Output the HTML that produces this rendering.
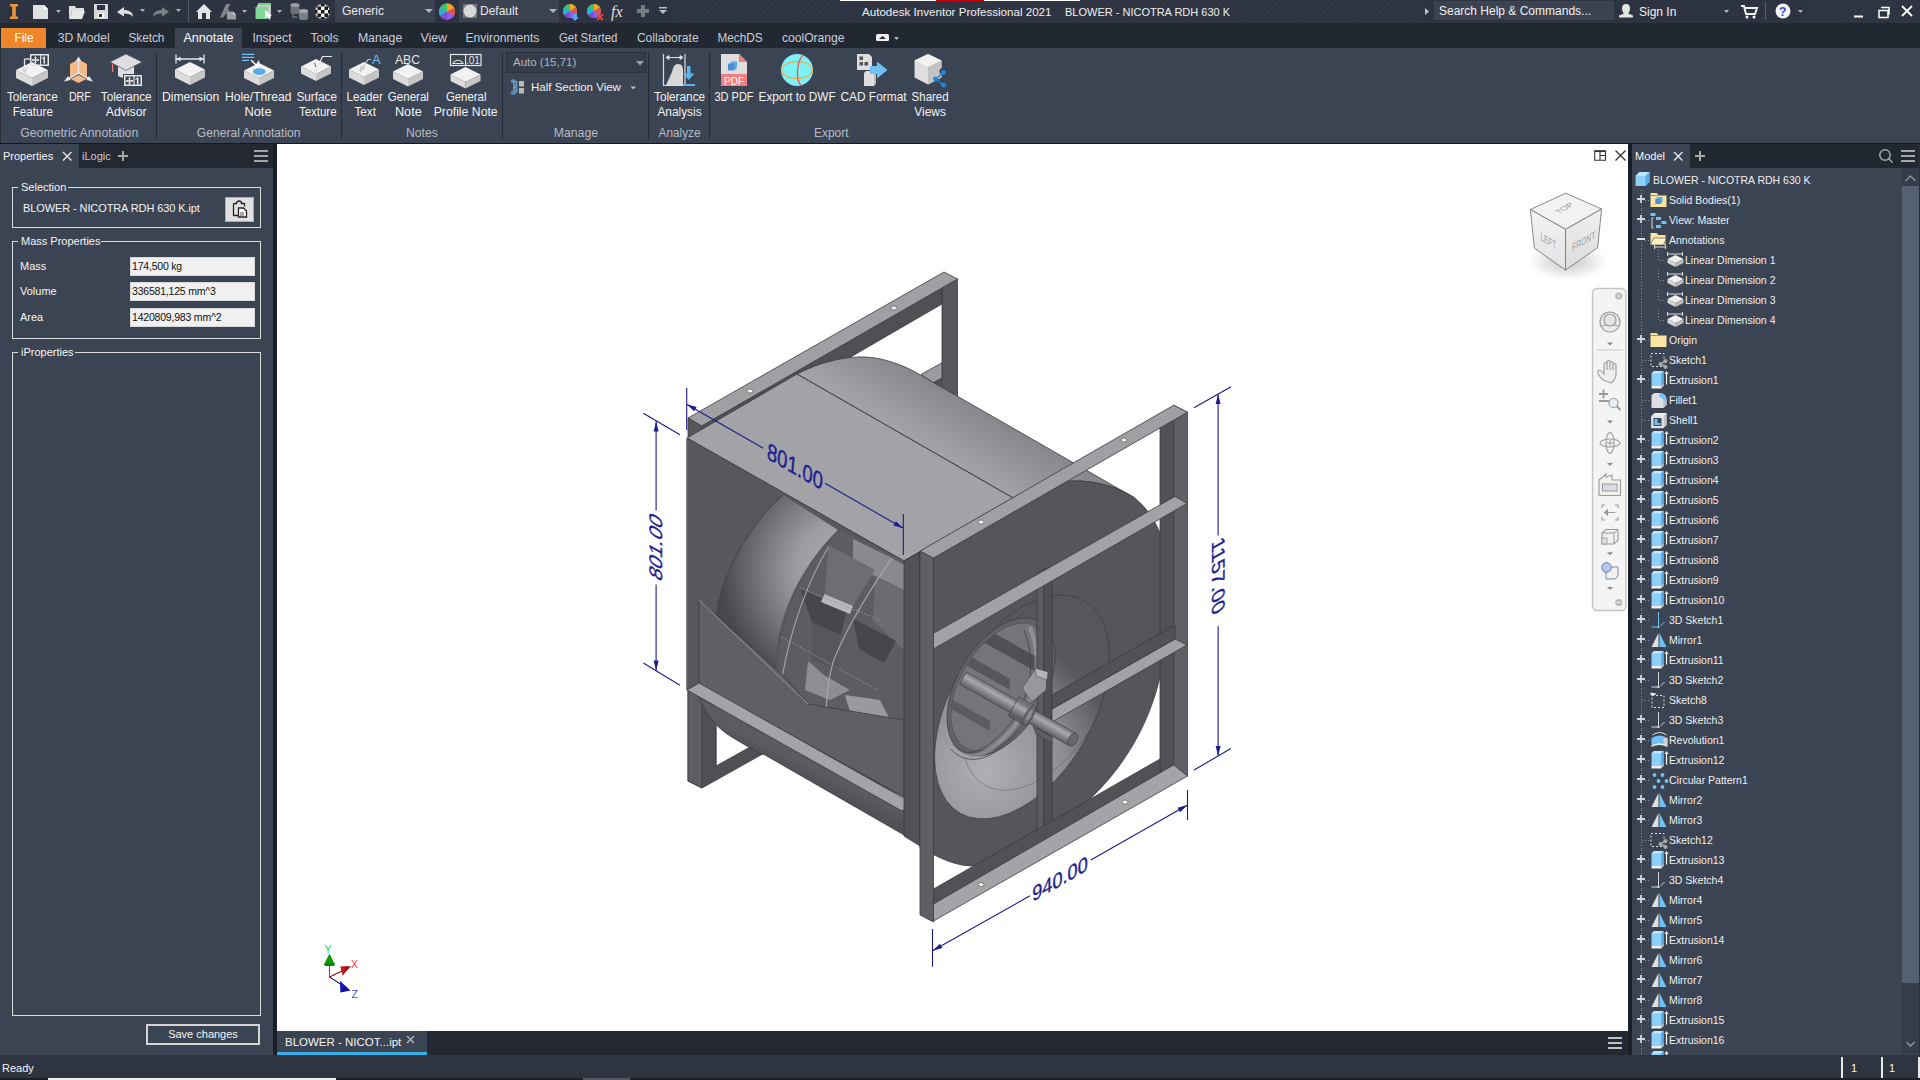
<!DOCTYPE html>
<html><head><meta charset="utf-8">
<style>
*{margin:0;padding:0;box-sizing:border-box}
html,body{width:1920px;height:1080px;overflow:hidden;background:#1b1f26;font-family:"Liberation Sans",sans-serif;color:#f0f0f0}
.a{position:absolute}
.t{position:absolute;white-space:nowrap;font-size:12px;line-height:14px}
svg{position:absolute;overflow:visible}
#title{left:0;top:0;width:1920px;height:23px;background:#2d3340}
.hatch{background:repeating-linear-gradient(135deg,#2d3340 0px,#2d3340 3px,#363c49 3.6px,#2d3340 4.4px)}
#tabs{left:0;top:23px;width:1920px;height:25px;background:#222832}
#ribbon{left:0;top:48px;width:1920px;height:95px;background:#3b4453}
#lp{left:0;top:144px;width:273px;height:911px;background:#3b4453}
#vp{left:277px;top:144px;width:1351px;height:887px;background:#fff;overflow:hidden}
#doctabs{left:277px;top:1031px;width:1351px;height:24px;background:#232832}
#rp{left:1632px;top:144px;width:288px;height:911px;background:#3b4453}
#status{left:0;top:1055px;width:1920px;height:23px;background:#2e3440}
#bottom{left:0;top:1078px;width:1920px;height:2px;background:#1d2026}
.tab{color:#c9ced6}
.rl{color:#f2f2f2;text-align:center;line-height:15px}
.pl{color:#b7bcc5}
.sep{position:absolute;top:52px;width:1px;height:87px;background:#252a33}
.tr{position:absolute;left:0;height:20px;font-size:10.5px;line-height:20px;color:#f0f0f0;white-space:nowrap}
</style></head><body>
<!-- TITLE BAR -->
<div id="title" class="a"></div>
<div class="a hatch" style="left:671px;top:0;width:750px;height:23px"></div>
<div class="a hatch" style="left:1806px;top:0;width:114px;height:23px"></div>
<div class="a hatch" style="left:0;top:0;width:6px;height:23px"></div>
<div class="a" style="left:840px;top:0;width:96px;height:1px;background:#fff"></div>
<div class="a" style="left:936px;top:0;width:48px;height:1px;background:#c00"></div>
<div class="a" style="left:984px;top:0;width:96px;height:1px;background:#fff"></div>
<svg style="left:0;top:0" width="680" height="23">
 <!-- Inventor I -->
 <path d="M10 4h8v2.5h-2.2v10h2.2v2.5h-8v-2.5h2.2v-10h-2.2z" fill="#e8963a"/>
 <!-- new -->
 <path d="M33 5h11l4 4v10h-15z" fill="#e0e0e0"/><path d="M44 5v4h4" fill="#fff"/>
 <path d="M56 10h5l-2.5 3z" fill="#aeb4c0"/>
 <!-- open -->
 <path d="M69 6h6l1 2h8v3h-12l-3 8z" fill="#e0e0e0"/><path d="M72 11h13l-3 8h-13z" fill="#e8e8e8"/>
 <!-- save -->
 <path d="M94 4h14v15h-14z" fill="#d8d8d8"/><rect x="97" y="5" width="8" height="5" fill="#2d3340"/><rect x="98" y="13" width="6" height="5" fill="#fff"/><rect x="99" y="14" width="3" height="3" fill="#2d3340"/>
 <!-- undo -->
 <path d="M117 12l7-5v3c5 0 9 2 9 7c-2-3-5-3.5-9-3.5v3z" fill="#e0e0e0"/>
 <path d="M140 9h5l-2.5 3z" fill="#aeb4c0"/>
 <!-- redo -->
 <path d="M169 12l-7-5v3c-5 0-9 2-9 7c2-3 5-3.5 9-3.5v3z" fill="#7c8088"/>
 <path d="M176 9h5l-2.5 3z" fill="#aeb4c0"/>
 <rect x="188" y="0" width="1" height="22" fill="#545a64"/>
 <!-- home -->
 <path d="M196 12l8-8 8 8h-2v7h-12v-7z" fill="#e4e4e4"/><rect x="202" y="13" width="4" height="6" fill="#2d3340"/>
 <path d="M220 17.5L226 4H230.5L227.5 9.5H230L223 17.5z" fill="#82858c"/><path d="M227 11.5h6l3 3v5h-9z" fill="#9a9ca2"/><path d="M233 11.5v3h3" fill="#c8c8c8"/>
 <path d="M242 10h5l-2.5 3z" fill="#aeb4c0"/>
 <!-- green -->
 <rect x="258" y="3" width="13" height="2" fill="#6fd68a"/><rect x="257" y="5" width="14" height="13" fill="#c8c8c8"/><rect x="255.5" y="7" width="12" height="12" fill="#7fd89a"/>
 <path d="M265 10l7 6h-3l1.5 3.5h-1.5l-1.5-3-2 2z" fill="#fff"/>
 <path d="M277 10h5l-2.5 3z" fill="#aeb4c0"/>
 <!-- cylinders -->
 <rect x="290.5" y="5" width="9" height="7" fill="#6e7178"/><ellipse cx="295" cy="12" rx="4.5" ry="2" fill="#6e7178"/><ellipse cx="295" cy="5" rx="4.5" ry="2" fill="#9a9da4"/>
 <rect x="299" y="11" width="9" height="7" fill="#7a7d84"/><ellipse cx="303.5" cy="18" rx="4.5" ry="2" fill="#7a7d84"/><ellipse cx="303.5" cy="11" rx="4.5" ry="2" fill="#a4a7ae"/><path d="M293 14v3h4" fill="none" stroke="#8a8d94" stroke-width="1"/>
 <!-- checker ball -->
 <clipPath id="cBall"><circle cx="322.5" cy="11.5" r="8"/></clipPath><circle cx="322.5" cy="11.5" r="8" fill="#f4f4f4"/><g clip-path="url(#cBall)" fill="#1a1a1a"><rect x="314" y="3" width="3.5" height="3.5"/><rect x="321" y="3" width="3.5" height="3.5"/><rect x="328" y="3" width="3.5" height="3.5"/><rect x="317.5" y="6.5" width="3.5" height="3.5"/><rect x="324.5" y="6.5" width="3.5" height="3.5"/><rect x="314" y="10" width="3.5" height="3.5"/><rect x="321" y="10" width="3.5" height="3.5"/><rect x="328" y="10" width="3.5" height="3.5"/><rect x="317.5" y="13.5" width="3.5" height="3.5"/><rect x="324.5" y="13.5" width="3.5" height="3.5"/><rect x="314" y="17" width="3.5" height="3.5"/><rect x="321" y="17" width="3.5" height="3.5"/><rect x="328" y="17" width="3.5" height="3.5"/></g><circle cx="322.5" cy="11.5" r="7.6" fill="none" stroke="#222" stroke-width="0.9"/>
 <!-- generic box -->
 <rect x="335" y="0" width="100" height="22" fill="#3b4250"/>
 <path d="M425 9h8l-4 4z" fill="#aeb4c0"/>
 <circle cx="447" cy="11.5" r="8" fill="#e94"/>
 <path d="M447 11.5L447 3.5A8 8 0 0 1 454 8z" fill="#f5a623"/><path d="M447 11.5L454 8A8 8 0 0 1 454 15.5z" fill="#e84f4f"/><path d="M447 11.5L454 15.5A8 8 0 0 1 447 19.5z" fill="#8b5cf6"/><path d="M447 11.5L447 19.5A8 8 0 0 1 440 15.5z" fill="#7c4ddb"/><path d="M447 11.5L440 15.5A8 8 0 0 1 440 8z" fill="#1fb5d6"/><path d="M447 11.5L440 8A8 8 0 0 1 447 3.5z" fill="#3cc46a"/>
 <rect x="459" y="0" width="100" height="22" fill="#3b4250"/>
 <rect x="463" y="4" width="14" height="14" fill="#777"/><circle cx="470" cy="11" r="6.5" fill="#d8d8d8"/>
 <path d="M549 9h8l-4 4z" fill="#aeb4c0"/>
 <g transform="translate(570,11)"><circle r="7" fill="#3cc46a"/><path d="M0 0L0 -7A7 7 0 0 1 6 -3.5z" fill="#f5a623"/><path d="M0 0L6 -3.5A7 7 0 0 1 6 3.5z" fill="#e84f4f"/><path d="M0 0L6 3.5A7 7 0 0 1 0 7z" fill="#8b5cf6"/><path d="M0 0L0 7A7 7 0 0 1 -6 3.5z" fill="#7c4ddb"/><path d="M0 0L-6 3.5A7 7 0 0 1 -6 -3.5z" fill="#1fb5d6"/></g>
 <path d="M573 14h4v3h2l-4 4-4-4h2z" fill="#4aa8f0"/>
 <g transform="translate(594,11)"><circle r="7" fill="#3cc46a"/><path d="M0 0L0 -7A7 7 0 0 1 6 -3.5z" fill="#f5a623"/><path d="M0 0L6 -3.5A7 7 0 0 1 6 3.5z" fill="#e84f4f"/><path d="M0 0L6 3.5A7 7 0 0 1 0 7z" fill="#8b5cf6"/><path d="M0 0L0 7A7 7 0 0 1 -6 3.5z" fill="#7c4ddb"/><path d="M0 0L-6 3.5A7 7 0 0 1 -6 -3.5z" fill="#1fb5d6"/></g>
 <path d="M597 14l6 6M603 14l-6 6" stroke="#ee4444" stroke-width="1.8"/>
 <text x="611" y="17" font-family="Liberation Serif" font-style="italic" font-size="16" fill="#e0e0e0">fx</text>
 <path d="M641 5h4v4h4v4h-4v4h-4v-4h-4v-4h4z" fill="#787b82"/>
 <rect x="659" y="7" width="8" height="1.5" fill="#b8c0cc"/><path d="M659 10h8l-4 4z" fill="#b8c0cc"/>
</svg>
<div class="t" style="left:342px;top:4px;font-size:12px;color:#e8e8e8">Generic</div>
<div class="t" style="left:480px;top:4px;font-size:12px;color:#e8e8e8">Default</div>
<div class="t" style="left:862px;top:5px;font-size:11.6px;color:#f0f0f0">Autodesk Inventor Professional 2021</div>
<div class="t" style="left:1065px;top:5px;font-size:11px;color:#f0f0f0">BLOWER - NICOTRA RDH 630 K</div>
<svg style="left:1400px;top:0" width="520" height="23">
 <path d="M25 8l4 3.5-4 3.5z" fill="#c0c4cc"/>
 <rect x="34" y="1" width="180" height="19" fill="#3b4250"/>
 <path d="M226 4c3 0 4 2 4 4.5s-1 4-2 5l5 2v2h-14v-2l5-2c-1-1-2-2.5-2-5s1-4.5 4-4.5z" fill="#e4e4e4"/>
 <path d="M324 10h5l-2.5 3z" fill="#aeb4c0"/>
 <path d="M341 6h3l2 8h9l2-6h-12" fill="none" stroke="#f0f0f0" stroke-width="2"/><circle cx="347" cy="17" r="1.5" fill="#fff"/><circle cx="354" cy="17" r="1.5" fill="#fff"/>
 <rect x="365" y="2" width="1" height="18" fill="#5a606a"/>
 <circle cx="383" cy="11" r="7.5" fill="#f4f4f4"/><text x="379" y="15.5" font-size="12" font-weight="bold" fill="#1e50c8">?</text>
 <path d="M398 10h5l-2.5 3z" fill="#aeb4c0"/>
 <rect x="454" y="15.5" width="9" height="2" fill="#fff"/>
 <path d="M479 10.5h9v7h-9z M481 7.5h8v7" fill="none" stroke="#fff" stroke-width="1.5"/>
 <path d="M502 6l10 10M512 6l-10 10" stroke="#fff" stroke-width="1.8"/>
</svg>
<div class="t" style="left:1439px;top:4px;font-size:12px;color:#f0f0f0">Search Help &amp; Commands...</div>
<div class="t" style="left:1639px;top:5px;font-size:12px;color:#f0f0f0">Sign In</div>

<!-- TABS -->
<div id="tabs" class="a"></div>
<div class="a" style="left:1px;top:28px;width:45px;height:20px;background:#f0862a"></div>
<div class="a" style="left:175px;top:28px;width:67px;height:20px;background:#3b4453"></div>
<svg style="left:0;top:0" width="960" height="48">
<text x="14.4" y="42" font-family="Liberation Sans" font-size="12" fill="#fff" textLength="19.2" lengthAdjust="spacingAndGlyphs">File</text>
<text x="57.699999999999996" y="42" font-family="Liberation Sans" font-size="12" fill="#c9ced6" textLength="51.9" lengthAdjust="spacingAndGlyphs">3D Model</text>
<text x="128.4" y="42" font-family="Liberation Sans" font-size="12" fill="#c9ced6" textLength="36.0" lengthAdjust="spacingAndGlyphs">Sketch</text>
<text x="183.4" y="42" font-family="Liberation Sans" font-size="12" fill="#fff" textLength="50.2" lengthAdjust="spacingAndGlyphs">Annotate</text>
<text x="252.4" y="42" font-family="Liberation Sans" font-size="12" fill="#c9ced6" textLength="39.2" lengthAdjust="spacingAndGlyphs">Inspect</text>
<text x="310.4" y="42" font-family="Liberation Sans" font-size="12" fill="#c9ced6" textLength="28.2" lengthAdjust="spacingAndGlyphs">Tools</text>
<text x="357.9" y="42" font-family="Liberation Sans" font-size="12" fill="#c9ced6" textLength="44.4" lengthAdjust="spacingAndGlyphs">Manage</text>
<text x="420.4" y="42" font-family="Liberation Sans" font-size="12" fill="#c9ced6" textLength="26.7" lengthAdjust="spacingAndGlyphs">View</text>
<text x="465.4" y="42" font-family="Liberation Sans" font-size="12" fill="#c9ced6" textLength="74.0" lengthAdjust="spacingAndGlyphs">Environments</text>
<text x="558.9" y="42" font-family="Liberation Sans" font-size="12" fill="#c9ced6" textLength="58.5" lengthAdjust="spacingAndGlyphs">Get Started</text>
<text x="636.9" y="42" font-family="Liberation Sans" font-size="12" fill="#c9ced6" textLength="61.7" lengthAdjust="spacingAndGlyphs">Collaborate</text>
<text x="717.4" y="42" font-family="Liberation Sans" font-size="12" fill="#c9ced6" textLength="45.2" lengthAdjust="spacingAndGlyphs">MechDS</text>
<text x="781.9" y="42" font-family="Liberation Sans" font-size="12" fill="#c9ced6" textLength="62.7" lengthAdjust="spacingAndGlyphs">coolOrange</text>
</svg>
<svg style="left:870px;top:23px" width="40" height="25"><rect x="6" y="11" width="13" height="7" rx="1.5" fill="#f0f0f0"/><path d="M9 16l3.5-3 3.5 3z" fill="#222832"/><path d="M24 14h5l-2.5 3z" fill="#aeb4c0"/></svg>

<!-- RIBBON -->
<div id="ribbon" class="a"></div>
<div class="a" style="left:0;top:48px;width:1px;height:95px;background:#2a303a"></div>
<div class="a" style="left:0;top:143px;width:1920px;height:1px;background:#161a20"></div>
<div class="sep" style="left:156px"></div>
<div class="sep" style="left:341px"></div>
<div class="sep" style="left:502px"></div>
<div class="sep" style="left:648px"></div>
<div class="sep" style="left:709px"></div>
<svg style="left:0;top:0" width="960" height="143">
<path d="M32 62L48 70.0L32 78.0L16 70.0z" fill="#f2f2f2"/><path d="M16 70.0L32 78.0L32 86.0L16 78.0z" fill="#dcdcdc"/><path d="M32 78.0L48 70.0L48 78.0L32 86.0z" fill="#c6c6c6"/>
<path d="M24.5 59V71" stroke="#e6e6e6" stroke-width="1.3" fill="none"/><path d="M24.5 59H30" stroke="#e6e6e6" stroke-width="1.3"/><path d="M21.5 67l3 5 3-5" fill="none" stroke="#c8c8c8" stroke-width="1.2"/>
<rect x="30.75" y="54.75" width="17.5" height="10.5" fill="none" stroke="#e6e6e6" stroke-width="1.5"/><rect x="39.95" y="54" width="1.2" height="12" fill="#e6e6e6"/><path d="M35.5 56.5v7M32 60h7" stroke="#e6e6e6" stroke-width="1.3"/><path d="M35.5 56.5l-1.5 1.5h3zM35.5 63.5l-1.5 -1.5h3zM32 60l1.5 -1.5v3zM39 60l-1.5 -1.5v3z" fill="#e6e6e6"/><rect x="43.45" y="56.5" width="1.6" height="7" fill="#e6e6e6"/><path d="M43.45 56.5l-1.5 1.5v1l1.5-0.5z" fill="#e6e6e6"/>
<path d="M70 64l8.5-4.5v13l-8.5 4.5z" fill="#f5b987"/><path d="M87 64l-8.5-4.5v13l8.5 4.5z" fill="#f5b987"/><path d="M78.5 75l8 4-8 4-8-4z" fill="#f5b987"/>
<path d="M78.5 73V59M78.5 73L67 79.5M78.5 73L90 79.5" stroke="#e8e8e8" stroke-width="1.5"/>
<path d="M78.5 56.5l-3 5h6z M64 81.5l6.5-1.5-2.5-4z M93 81.5l-6.5-1.5 2.5-4z" fill="#e8e8e8"/>
<path d="M118 66.5h16v10.5l-6 0-4 1.5-6-2.5z" fill="#dedede"/>
<path d="M126 54L142 62L126 70.5L110 62z" fill="#dedede" stroke="#3b4453" stroke-width="0.6"/>
<rect x="112" y="64" width="1.3" height="8" fill="#f07070"/>
<rect x="123" y="74" width="20" height="13" fill="#3b4453"/>
<rect x="124.75" y="75.75" width="16.5" height="9.5" fill="none" stroke="#e6e6e6" stroke-width="1.5"/><rect x="133.4" y="75" width="1.2" height="11" fill="#e6e6e6"/><path d="M129.5 77.5v7M126 81h7" stroke="#e6e6e6" stroke-width="1.3"/><path d="M129.5 77.5l-1.5 1.5h3zM129.5 84.5l-1.5 -1.5h3zM126 81l1.5 -1.5v3zM133 81l-1.5 -1.5v3z" fill="#e6e6e6"/><rect x="136.9" y="77.5" width="1.6" height="7" fill="#e6e6e6"/><path d="M136.9 77.5l-1.5 1.5v1l1.5-0.5z" fill="#e6e6e6"/>
<path d="M190 62L205 69.5L190 77.0L175 69.5z" fill="#f2f2f2"/><path d="M175 69.5L190 77.0L190 85.0L175 77.5z" fill="#dcdcdc"/><path d="M190 77.0L205 69.5L205 77.5L190 85.0z" fill="#c6c6c6"/>
<path d="M176 54.5v9M204 54.5v9M176 59h28" stroke="#e6e6e6" stroke-width="1.3"/><path d="M176.5 59l4-2.5v5zM203.5 59l-4-2.5v5z" fill="#e6e6e6"/>
<path d="M259 63L274 70.5L259 78.0L244 70.5z" fill="#f2f2f2"/><path d="M244 70.5L259 78.0L259 85.5L244 78.0z" fill="#dcdcdc"/><path d="M259 78.0L274 70.5L274 78.0L259 85.5z" fill="#c6c6c6"/>
<ellipse cx="259.3" cy="71.6" rx="6.4" ry="3.3" fill="#5aaae6"/>
<path d="M242 54.4h12.3M242 57.3h12.3M242 60.3h7" stroke="#6ec0f5" stroke-width="1.2"/>
<path d="M251 60l6 6" stroke="#fff" stroke-width="1.5"/><path d="M254 67l6-1-1-6z" fill="#fff"/>
<path d="M316 59L331 66.5L316 74.0L301 66.5z" fill="#f2f2f2"/><path d="M301 66.5L316 74.0L316 81.0L301 73.5z" fill="#dcdcdc"/><path d="M316 74.0L331 66.5L331 73.5L316 81.0z" fill="#c6c6c6"/>
<path d="M313 63l3 7.5l6.5-14h9.5" fill="none" stroke="#e8e8e8" stroke-width="1.2"/><path d="M314.5 63l1.5 4" stroke="#3b4453" stroke-width="0.8"/>
<path d="M364 62L379 69.5L364 77.0L349 69.5z" fill="#f2f2f2"/><path d="M349 69.5L364 77.0L364 85.0L349 77.5z" fill="#dcdcdc"/><path d="M364 77.0L379 69.5L379 77.5L364 85.0z" fill="#c6c6c6"/>
<text x="372" y="64" font-size="13" fill="#6ec0f5" font-family="Liberation Sans">A</text>
<path d="M371 59.5h-3l-8 12" stroke="#c8c8c8" stroke-width="1.2" fill="none"/><path d="M360 72l1-6 4 2z" fill="#d0d0d0" stroke="#c8c8c8" stroke-width="0.8"/>
<path d="M408 64L423 71.5L408 79.0L393 71.5z" fill="#f2f2f2"/><path d="M393 71.5L408 79.0L408 86.5L393 79.0z" fill="#dcdcdc"/><path d="M408 79.0L423 71.5L423 79.0L408 86.5z" fill="#c6c6c6"/>
<text x="395" y="64" font-size="12.5" fill="#e6e6e6" font-family="Liberation Sans" textLength="25" lengthAdjust="spacingAndGlyphs">ABC</text>
<path d="M465.5 67L480.5 74.5L465.5 82.0L450.5 74.5z" fill="#f2f2f2"/><path d="M450.5 74.5L465.5 82.0L465.5 88.5L450.5 81.0z" fill="#dcdcdc"/><path d="M465.5 82.0L480.5 74.5L480.5 81.0L465.5 88.5z" fill="#c6c6c6"/>
<rect x="450.5" y="54.5" width="30.5" height="11" fill="none" stroke="#e6e6e6" stroke-width="1.2"/><rect x="465" y="54.5" width="1.1" height="11" fill="#e6e6e6"/><path d="M453 63.5a5.5 5.5 0 0 1 10 0z" fill="none" stroke="#e6e6e6" stroke-width="1.1"/>
<text x="466" y="64" font-size="10" fill="#e6e6e6" font-family="Liberation Sans">.01</text>
<path d="M512 80h3M512 80v3M512 91v3h3M515 80v14" stroke="#5ab4f0" stroke-width="1.2" fill="none"/><rect x="513.5" y="81.5" width="3.5" height="4.5" fill="#6a7a8c" stroke="#5ab4f0" stroke-width="0.8"/><rect x="513.5" y="87.5" width="3.5" height="4.5" fill="#6a7a8c" stroke="#5ab4f0" stroke-width="0.8"/><rect x="519" y="81" width="5" height="5.5" fill="#b8b8b8"/><rect x="519" y="88" width="5" height="5.5" fill="#b8b8b8"/>
<path d="M636 61h8l-4 4.5z" fill="#9aa0aa"/><path d="M630.5 86.5h5.5l-2.75 3z" fill="#b8bec8"/>
<path d="M663.5 54v31.5h21M685 54v32" stroke="#dcdcdc" stroke-width="1.2" fill="none"/><path d="M666 57.5h17M666 57.5l3-2v4zM683 57.5l-3-2v4z" stroke="#dcdcdc" stroke-width="1" fill="#dcdcdc"/>
<path d="M666 85l6-13c1-4 2-8 6-8s5 3 5 6v15z" fill="#d8d8d8"/>
<path d="M687 66h3.5v7.5h4l-5.75 6.5-5.75-6.5h4z" fill="#5ab4f0"/><rect x="683" y="84" width="12" height="2" fill="#5ab4f0"/>
<path d="M721 54h18l8 8v24h-26z" fill="#dedede"/><path d="M739 54l8 8h-8z" fill="#f08080"/><rect x="721" y="74" width="26" height="12" fill="#f08080"/>
<text x="724" y="84.5" font-size="10" fill="#fff" font-family="Liberation Sans">PDF</text>
<path d="M728 64l4-2.5h5v6.5l-3 2.5h-6z" fill="#5aa8e8"/><path d="M728 64h6v6h-6z" fill="#4a90d0"/>
<circle cx="797" cy="70" r="16" fill="#7ef0f8"/>
<ellipse cx="797" cy="70" rx="15.5" ry="8.5" fill="none" stroke="#f0b040" stroke-width="1.3"/><path d="M804 54.5c-7 5-9 24-3 31" fill="none" stroke="#e85a5a" stroke-width="1.3"/>
<path d="M857 54h12l3 3v13h-15z" fill="#dedede"/><rect x="859.5" y="56.5" width="3.5" height="3.5" fill="#555"/><rect x="859.5" y="62" width="3.5" height="3.5" fill="#555"/><rect x="864.5" y="62" width="3.5" height="3.5" fill="#555"/>
<path d="M864 73l2-2h10v12l-2 3h-10z" fill="#dedede"/><path d="M874 74l2-3v12l-2 3z" fill="#bdbdbd"/>
<path d="M870 66h7v-4.5l10.5 8.5-10.5 8.5v-4.5h-7z" fill="#6ec0f5"/>
<path d="M928 54l13.5 6.5v17l-13.5 7-13.5-7v-17z" fill="#dedede"/><path d="M914.5 60.5l13.5 6.5 13.5-6.5-13.5-6.5z" fill="#f2f2f2"/><path d="M928 67l13.5-6.5v17l-13.5 7z" fill="#c2c2c2"/>
<circle cx="943" cy="71.5" r="3.5" fill="#3b4453"/><path d="M936 79l7-6M936 79l7 6" stroke="#1e88e5" stroke-width="1.6"/><circle cx="935.5" cy="79" r="2.4" fill="#1e88e5"/><circle cx="943.5" cy="72.5" r="2.4" fill="#1e88e5"/><circle cx="943.5" cy="85" r="2.4" fill="#1e88e5"/>
</svg>
<svg style="left:0;top:0" width="960" height="143">
<text x="6.9" y="101" font-family="Liberation Sans" font-size="12" fill="#f2f2f2" textLength="50.8" lengthAdjust="spacingAndGlyphs">Tolerance</text>
<text x="12.700000000000001" y="116" font-family="Liberation Sans" font-size="12" fill="#f2f2f2" textLength="40.2" lengthAdjust="spacingAndGlyphs">Feature</text>
<text x="68.9" y="101" font-family="Liberation Sans" font-size="12" fill="#f2f2f2" textLength="22.0" lengthAdjust="spacingAndGlyphs">DRF</text>
<text x="100.80000000000001" y="101" font-family="Liberation Sans" font-size="12" fill="#f2f2f2" textLength="50.8" lengthAdjust="spacingAndGlyphs">Tolerance</text>
<text x="105.7" y="116" font-family="Liberation Sans" font-size="12" fill="#f2f2f2" textLength="41.0" lengthAdjust="spacingAndGlyphs">Advisor</text>
<text x="161.9" y="101" font-family="Liberation Sans" font-size="12" fill="#f2f2f2" textLength="57.5" lengthAdjust="spacingAndGlyphs">Dimension</text>
<text x="224.9" y="101" font-family="Liberation Sans" font-size="12" fill="#f2f2f2" textLength="66.7" lengthAdjust="spacingAndGlyphs">Hole/Thread</text>
<text x="244.4" y="116" font-family="Liberation Sans" font-size="12" fill="#f2f2f2" textLength="27.2" lengthAdjust="spacingAndGlyphs">Note</text>
<text x="296.4" y="101" font-family="Liberation Sans" font-size="12" fill="#f2f2f2" textLength="40.7" lengthAdjust="spacingAndGlyphs">Surface</text>
<text x="298.9" y="116" font-family="Liberation Sans" font-size="12" fill="#f2f2f2" textLength="37.7" lengthAdjust="spacingAndGlyphs">Texture</text>
<text x="346.59999999999997" y="101" font-family="Liberation Sans" font-size="12" fill="#f2f2f2" textLength="36.3" lengthAdjust="spacingAndGlyphs">Leader</text>
<text x="354.4" y="116" font-family="Liberation Sans" font-size="12" fill="#f2f2f2" textLength="21.5" lengthAdjust="spacingAndGlyphs">Text</text>
<text x="387.79999999999995" y="101" font-family="Liberation Sans" font-size="12" fill="#f2f2f2" textLength="41.1" lengthAdjust="spacingAndGlyphs">General</text>
<text x="394.9" y="116" font-family="Liberation Sans" font-size="12" fill="#f2f2f2" textLength="26.9" lengthAdjust="spacingAndGlyphs">Note</text>
<text x="445.9" y="101" font-family="Liberation Sans" font-size="12" fill="#f2f2f2" textLength="40.6" lengthAdjust="spacingAndGlyphs">General</text>
<text x="433.7" y="116" font-family="Liberation Sans" font-size="12" fill="#f2f2f2" textLength="64.0" lengthAdjust="spacingAndGlyphs">Profile Note</text>
<text x="654.0" y="101" font-family="Liberation Sans" font-size="12" fill="#f2f2f2" textLength="51.1" lengthAdjust="spacingAndGlyphs">Tolerance</text>
<text x="657.4" y="116" font-family="Liberation Sans" font-size="12" fill="#f2f2f2" textLength="44.2" lengthAdjust="spacingAndGlyphs">Analysis</text>
<text x="714.4" y="101" font-family="Liberation Sans" font-size="12" fill="#f2f2f2" textLength="39.2" lengthAdjust="spacingAndGlyphs">3D PDF</text>
<text x="758.6" y="101" font-family="Liberation Sans" font-size="12" fill="#f2f2f2" textLength="77.0" lengthAdjust="spacingAndGlyphs">Export to DWF</text>
<text x="840.4" y="101" font-family="Liberation Sans" font-size="12" fill="#f2f2f2" textLength="66.2" lengthAdjust="spacingAndGlyphs">CAD Format</text>
<text x="911.6" y="101" font-family="Liberation Sans" font-size="12" fill="#f2f2f2" textLength="37.0" lengthAdjust="spacingAndGlyphs">Shared</text>
<text x="914.3" y="116" font-family="Liberation Sans" font-size="12" fill="#f2f2f2" textLength="31.7" lengthAdjust="spacingAndGlyphs">Views</text>
</svg>
<div class="a" style="left:506px;top:52px;width:140px;height:21px;background:#353d4b;border:1px solid #2a313c"></div>
<div class="t" style="left:513px;top:55px;font-size:11.5px;color:#b0b5bd">Auto (15,71)</div>
<svg style="left:630px;top:55px" width="20" height="15"><path d="M6 6h8l-4 4.5z" fill="#9aa0aa"/></svg>
<div class="t" style="left:531px;top:80px;font-size:11.5px;color:#f0f0f0">Half Section View</div>


<svg style="left:0;top:0" width="960" height="143">
<text x="20.2" y="136.5" font-family="Liberation Sans" font-size="12" fill="#b7bcc5" textLength="118.1" lengthAdjust="spacingAndGlyphs">Geometric Annotation</text>
<text x="196.8" y="136.5" font-family="Liberation Sans" font-size="12" fill="#b7bcc5" textLength="103.8" lengthAdjust="spacingAndGlyphs">General Annotation</text>
<text x="406.09999999999997" y="136.5" font-family="Liberation Sans" font-size="12" fill="#b7bcc5" textLength="31.7" lengthAdjust="spacingAndGlyphs">Notes</text>
<text x="553.8" y="136.5" font-family="Liberation Sans" font-size="12" fill="#b7bcc5" textLength="44.2" lengthAdjust="spacingAndGlyphs">Manage</text>
<text x="658.6" y="136.5" font-family="Liberation Sans" font-size="12" fill="#b7bcc5" textLength="41.9" lengthAdjust="spacingAndGlyphs">Analyze</text>
<text x="814.1" y="136.5" font-family="Liberation Sans" font-size="12" fill="#b7bcc5" textLength="34.4" lengthAdjust="spacingAndGlyphs">Export</text>
</svg>
<!-- LEFT PANEL -->
<div class="a" style="left:0;top:144px;width:273px;height:911px;background:#3b4453"></div>
<div class="a" style="left:0;top:144px;width:273px;height:24px;background:#232832"></div>
<div class="a" style="left:0;top:144px;width:79px;height:24px;background:#3b4453"></div>
<div class="t" style="left:3px;top:149px;font-size:11px;color:#f4f4f4">Properties</div>
<div class="t" style="left:82px;top:149px;font-size:11px;color:#c8ccd2">iLogic</div>
<svg style="left:0;top:144px" width="273" height="24"><path d="M63 8l8.5 8.5M71.5 8l-8.5 8.5" stroke="#e8e8e8" stroke-width="1.4"/><path d="M123 7v10M118 12h10" stroke="#a8a8a8" stroke-width="2"/><path d="M254 7h14M254 12h14M254 17h14" stroke="#a5a5a5" stroke-width="2"/></svg>
<div class="a" style="left:12px;top:187px;width:249px;height:41px;border:1px solid #dcdcdc"></div><div class="a" style="left:18px;top:184px;width:50px;height:6px;background:#3b4453"></div><div class="t" style="left:21px;top:180px;font-size:11px;color:#f4f4f4">Selection</div>
<div class="t" style="left:23px;top:201px;font-size:11px;color:#f4f4f4;letter-spacing:-0.1px">BLOWER - NICOTRA RDH 630 K.ipt</div>
<div class="a" style="left:225px;top:197px;width:29px;height:25px;background:#e1e1e1;border:1px solid #adadad"></div>
<svg style="left:225px;top:197px" width="29" height="25"><path d="M8.5 6.5h3a2.5 2.5 0 0 1 5 0h3v3" fill="none" stroke="#222" stroke-width="1.3"/><path d="M8.5 6.5v12h5" fill="none" stroke="#222" stroke-width="1.3"/><path d="M13.5 11h5l3 3v6h-8z" fill="#fff" stroke="#222" stroke-width="1.3"/><path d="M15 16h4M15 18h4" stroke="#222" stroke-width="0.8"/></svg>
<div class="a" style="left:12px;top:241px;width:249px;height:98px;border:1px solid #dcdcdc"></div><div class="a" style="left:18px;top:238px;width:83px;height:6px;background:#3b4453"></div><div class="t" style="left:21px;top:234px;font-size:11px;color:#f4f4f4">Mass Properties</div>
<div class="t" style="left:20px;top:259px;font-size:11px;color:#f4f4f4">Mass</div>
<div class="a" style="left:130px;top:257px;width:125px;height:19px;background:#f0f0f0;border:1px solid #d9d9d9"></div>
<div class="t" style="left:132px;top:259px;font-size:10.5px;color:#111;letter-spacing:-0.2px">174,500 kg</div>
<div class="t" style="left:20px;top:284px;font-size:11px;color:#f4f4f4">Volume</div>
<div class="a" style="left:130px;top:282px;width:125px;height:19px;background:#f0f0f0;border:1px solid #d9d9d9"></div>
<div class="t" style="left:132px;top:284px;font-size:10.5px;color:#111;letter-spacing:-0.2px">336581,125 mm^3</div>
<div class="t" style="left:20px;top:310px;font-size:11px;color:#f4f4f4">Area</div>
<div class="a" style="left:130px;top:308px;width:125px;height:19px;background:#f0f0f0;border:1px solid #d9d9d9"></div>
<div class="t" style="left:132px;top:310px;font-size:10.5px;color:#111;letter-spacing:-0.2px">1420809,983 mm^2</div>
<div class="a" style="left:12px;top:352px;width:249px;height:664px;border:1px solid #dcdcdc"></div><div class="a" style="left:18px;top:349px;width:57px;height:6px;background:#3b4453"></div><div class="t" style="left:21px;top:345px;font-size:11px;color:#f4f4f4">iProperties</div>
<div class="a" style="left:146px;top:1024px;width:114px;height:21px;border:2px solid #d4d4d4;background:#3b4453"></div>
<div class="t" style="left:146px;top:1027px;width:114px;text-align:center;font-size:11px;color:#f4f4f4">Save changes</div>
<div class="a" style="left:273px;top:144px;width:4px;height:911px;background:#1a1e25"></div>
<div class="a" style="left:1628px;top:144px;width:4px;height:911px;background:#1a1e25"></div>
<!-- VIEWPORT -->
<div class="a" style="left:277px;top:144px;width:1351px;height:887px;background:#fff"></div>
<svg style="left:0;top:0" width="1628" height="1031" viewBox="0 0 1628 1031">
<defs>
<linearGradient id="gWrap" gradientUnits="userSpaceOnUse" x1="930" y1="450" x2="960" y2="400"><stop offset="0" stop-color="#a4a4a8"/><stop offset="1" stop-color="#88888d"/></linearGradient>
<linearGradient id="gBot" gradientUnits="userSpaceOnUse" x1="800" y1="760" x2="780" y2="800"><stop offset="0" stop-color="#5a5c61"/><stop offset="1" stop-color="#3c3e42"/></linearGradient>
<radialGradient id="gCone" gradientUnits="userSpaceOnUse" cx="985" cy="760" r="130"><stop offset="0" stop-color="#a2a2a6"/><stop offset="0.55" stop-color="#6e7074"/><stop offset="1" stop-color="#4a4c50"/></radialGradient>
<radialGradient id="gBand" gradientUnits="userSpaceOnUse" cx="845" cy="570" r="125"><stop offset="0" stop-color="#b0b0b4"/><stop offset="0.4" stop-color="#9c9ca0"/><stop offset="0.75" stop-color="#6a6c70"/><stop offset="1" stop-color="#46484c"/></radialGradient>
<linearGradient id="gShaft" gradientUnits="userSpaceOnUse" x1="0" y1="-7" x2="0" y2="7"><stop offset="0" stop-color="#7a7c80"/><stop offset="0.4" stop-color="#a4a4a8"/><stop offset="1" stop-color="#55575b"/></linearGradient>
<clipPath id="cOut"><path d="M687 438L904 561L904 797L687 690z"/></clipPath>
<clipPath id="cInner"><ellipse cx="0" cy="0" rx="1" ry="1"/></clipPath>
</defs>
<path d="M942 287.7L957.5 279L957.5 400L942 400z" fill="#56585d" stroke="#3a3b3f" stroke-width="0.8" stroke-linejoin="round"/>
<path d="M925 380L942 370L942 398L928 398z" fill="#4e5055"/>
<path d="M921 374.4L942 362.8L942 377.8L933.3 382.8z" fill="#9c9ca0" stroke="#3a3b3f" stroke-width="0.8" stroke-linejoin="round"/>
<path d="M701.5 426L942 287.7L942 304L701.5 443.5z" fill="#4e5055" stroke="#3a3b3f" stroke-width="0.8" stroke-linejoin="round"/>
<path d="M688 418L944 272L957.5 279L701.5 426z" fill="#a0a0a4" stroke="#3a3b3f" stroke-width="0.8" stroke-linejoin="round"/>
<path d="M688 418L701.5 426L701.5 433L688 439z" fill="#55575c" stroke="#3a3b3f" stroke-width="0.8" stroke-linejoin="round"/>
<path d="M797 374C820 362 845 356 866 357C885 358 905 366 918.7 374L1134.7 498C1120 488 1100 482 1080 481C1055 480 1030 488 1013 498z" fill="url(#gWrap)" stroke="#3a3b3f" stroke-width="0.8" stroke-linejoin="round"/>
<path d="M688 683L716 698L716 766L768 737L768 751L702 788L688 781z" fill="#4e5055" stroke="#3a3b3f" stroke-width="0.8" stroke-linejoin="round"/>
<path d="M688 683L702 690L702 788L688 781z" fill="#5c5e63" stroke="#3a3b3f" stroke-width="0.8" stroke-linejoin="round"/>
<path d="M716 698V766" stroke="#3a3b3f" stroke-width="0.8"/>
<path d="M699 697C705 712 712 724 730 736C745 745 755 751 765 755L925 847L925 806L902 811z" fill="url(#gBot)" stroke="#3a3b3f" stroke-width="0.8" stroke-linejoin="round"/>
<path d="M687 438L797 374L1013 498L904 561z" fill="#a3a3a7" stroke="#3a3b3f" stroke-width="0.8" stroke-linejoin="round"/>
<path d="M797 374L1012 497" stroke="#505256" stroke-width="0.9"/>
<path d="M687 438L904 561L904 797L687 690z" fill="#56585d" stroke="#3a3b3f" stroke-width="0.8" stroke-linejoin="round"/>
<g clip-path="url(#cOut)">
<path d="M783 495C755 520 728 560 718 606C712 640 716 665 730 690L790 720C775 690 772 660 780 630C790 590 812 555 838 530z" fill="url(#gBand)"/>
<path d="M783 495C755 520 728 560 718 606C712 640 716 665 730 690" fill="none" stroke="#3e4044" stroke-width="0.8"/>
<path d="M841 531C812 555 792 590 782 637C776 660 775 690 790 720L904 760L904 561z" fill="#5b5d62"/>
<path d="M853 539L890 557L904 565L904 590L875 576L853 568z" fill="#8a8a8e"/>
<path d="M828.6 545L875 570L853 606L824.5 594z" fill="#6c6e72"/>
<path d="M875 576L904 590L904 650L873 621z" fill="#6a6c70"/>
<path d="M800 588L847 610L840.8 634.8L812 622.6z" fill="#45474b"/>
<path d="M824.5 594L853 606L850 614L821 602z" fill="#b8b8bc"/>
<path d="M853 618.5L896 641L884 663L859 649z" fill="#45474b"/>
<path d="M812 623L840 635L838 670L812 660z" fill="#55575b"/>
<path d="M808 661L824.5 675.6L850 690L830 700L805 690z" fill="#8e8e92"/>
<path d="M845 695L880 700L890 720L850 712z" fill="#9a9a9e"/>
<path d="M828.6 547C808 580 790 630 781.7 679.6" fill="none" stroke="#a8a8ac" stroke-width="1.1"/>
<path d="M891.7 558.4C870 590 845 630 832.7 663.3C828 680 826 700 826 720" fill="none" stroke="#a8a8ac" stroke-width="1.1"/>
<path d="M781.7 637L877.5 690" stroke="#9a9a9e" stroke-width="0.9" stroke-dasharray="1.5 1.5"/>
<path d="M800 588L881.6 620.6" stroke="#9a9a9e" stroke-width="0.9" stroke-dasharray="1.5 1.5"/>
<path d="M699 600L786 678L808 704L904 720L904 797L699 684z" fill="#5e6065" stroke="#3a3b3f" stroke-width="0.8" stroke-linejoin="round"/>
<path d="M699 600L808 704" stroke="#9a9a9e" stroke-width="1"/>
</g>
<path d="M687 438V690" stroke="#6a6c70" stroke-width="1.5"/>
<path d="M687 690L699 683L914 804L902 811z" fill="#a4a4a8" stroke="#3a3b3f" stroke-width="0.8" stroke-linejoin="round"/>
<path d="M904 561L920 552L920 846L904 836z" fill="#505257" stroke="#3a3b3f" stroke-width="0.8" stroke-linejoin="round"/>
<path d="M904 561L1013 498C1030 488 1055 480 1080 481C1100 482 1120 488 1134.7 498C1150 510 1162 530 1168 560C1172 595 1170 640 1159 681C1148 725 1125 765 1093 796C1060 828 1010 858 973 866C955 866 940 858 920 848L920 552z" fill="#54565b" stroke="#3a3b3f" stroke-width="0.8" stroke-linejoin="round"/>
<radialGradient id="gCone2" gradientUnits="userSpaceOnUse" cx="985" cy="770" r="135"><stop offset="0" stop-color="#b0b0b4"/><stop offset="0.6" stop-color="#8c8e92"/><stop offset="1" stop-color="#55575c"/></radialGradient>
<path d="M1109.5 656.8L1108.7 670.3L1106.5 684.4L1102.8 698.9L1097.8 713.6L1091.4 728.1L1083.9 742.3L1075.3 755.9L1065.7 768.6L1055.5 780.3L1044.6 790.7L1033.4 799.7L1022.0 807.1L1010.6 812.8L999.4 816.7L988.5 818.7L978.3 818.8L968.7 817.0L960.1 813.3L952.6 807.8L946.2 800.5L941.2 791.7L937.5 781.4L935.3 769.9L934.5 757.2L935.3 743.7L937.5 729.6L941.2 715.1L946.2 700.4L952.6 685.9L960.1 671.7L968.7 658.1L978.3 645.4L988.5 633.7L999.4 623.3L1010.6 614.3L1022.0 606.9L1033.4 601.2L1044.6 597.3L1055.5 595.3L1065.7 595.2L1075.3 597.0L1083.9 600.7L1091.4 606.2L1097.8 613.5L1102.8 622.3L1106.5 632.6L1108.7 644.1z" fill="url(#gCone2)" stroke="#3e4044" stroke-width="0.8"/>
<path d="M1118.3 645.0L1117.6 657.1L1115.6 669.8L1112.3 682.8L1107.8 695.9L1102.1 708.9L1095.4 721.6L1087.7 733.7L1079.2 745.1L1070.0 755.6L1060.3 764.9L1050.2 773.0L1040.0 779.6L1029.8 784.7L1019.7 788.2L1010.0 790.0L1000.9 790.1L992.3 788.5L984.6 785.1L977.9 780.2L972.2 773.7L967.7 765.8L964.4 756.6L962.4 746.3L961.7 735.0L962.4 722.9L964.4 710.2L967.7 697.2L972.2 684.1L977.9 671.1L984.6 658.4L992.3 646.3L1000.8 634.9L1010.0 624.4L1019.7 615.1L1029.8 607.0L1040.0 600.4L1050.2 595.3L1060.3 591.8L1070.0 590.0L1079.2 589.9L1087.7 591.5L1095.4 594.9L1102.1 599.8L1107.8 606.3L1112.3 614.2L1115.6 623.4L1117.6 633.7z" fill="none" stroke="#45474b" stroke-width="0.6" opacity="0.6"/>
<path d="M1055.0 656.0L1054.5 664.3L1053.2 673.1L1050.9 682.0L1047.8 691.1L1043.8 700.0L1039.2 708.8L1033.9 717.2L1028.0 725.0L1021.7 732.2L1015.0 738.7L1008.0 744.2L1001.0 748.8L994.0 752.3L987.0 754.7L980.3 756.0L974.0 756.0L968.1 754.9L962.8 752.6L958.2 749.2L954.2 744.7L951.1 739.3L948.8 732.9L947.5 725.8L947.0 718.0L947.5 709.7L948.8 700.9L951.1 692.0L954.2 682.9L958.2 674.0L962.8 665.2L968.1 656.8L974.0 649.0L980.3 641.8L987.0 635.3L994.0 629.8L1001.0 625.2L1008.0 621.7L1015.0 619.3L1021.7 618.0L1028.0 618.0L1033.9 619.1L1039.2 621.4L1043.8 624.8L1047.8 629.3L1050.9 634.7L1053.2 641.1L1054.5 648.2z" fill="#606266" stroke="#3e4044" stroke-width="0.8"/>
<clipPath id="cIn"><path d="M1050.7 658.5L1050.3 666.1L1049.0 674.2L1046.9 682.4L1044.0 690.7L1040.4 699.0L1036.1 707.0L1031.2 714.7L1025.8 722.0L1020.0 728.6L1013.9 734.5L1007.5 739.6L1001.0 743.9L994.5 747.1L988.1 749.3L982.0 750.4L976.2 750.5L970.8 749.5L965.9 747.4L961.6 744.2L958.0 740.1L955.1 735.1L953.0 729.3L951.7 722.7L951.3 715.5L951.7 707.9L953.0 699.8L955.1 691.6L958.0 683.3L961.6 675.0L965.9 667.0L970.8 659.3L976.2 652.0L982.0 645.4L988.1 639.5L994.5 634.4L1001.0 630.1L1007.5 626.9L1013.9 624.7L1020.0 623.6L1025.8 623.5L1031.2 624.5L1036.1 626.6L1040.4 629.8L1044.0 633.9L1046.9 638.9L1049.0 644.7L1050.3 651.3z"/></clipPath>
<path d="M1050.7 658.5L1050.3 666.1L1049.0 674.2L1046.9 682.4L1044.0 690.7L1040.4 699.0L1036.1 707.0L1031.2 714.7L1025.8 722.0L1020.0 728.6L1013.9 734.5L1007.5 739.6L1001.0 743.9L994.5 747.1L988.1 749.3L982.0 750.4L976.2 750.5L970.8 749.5L965.9 747.4L961.6 744.2L958.0 740.1L955.1 735.1L953.0 729.3L951.7 722.7L951.3 715.5L951.7 707.9L953.0 699.8L955.1 691.6L958.0 683.3L961.6 675.0L965.9 667.0L970.8 659.3L976.2 652.0L982.0 645.4L988.1 639.5L994.5 634.4L1001.0 630.1L1007.5 626.9L1013.9 624.7L1020.0 623.6L1025.8 623.5L1031.2 624.5L1036.1 626.6L1040.4 629.8L1044.0 633.9L1046.9 638.9L1049.0 644.7L1050.3 651.3z" fill="#88898d" stroke="#3e4044" stroke-width="0.8"/>
<g clip-path="url(#cIn)">
<rect x="900" y="600" width="200" height="200" fill="#747579"/>
<path d="M985 628L1040 659L1040 674L985 643z" fill="#4e5054"/>
<path d="M950 645L1010 679L1010 690L950 656z" fill="#55575b"/>
<path d="M935 690L990 721L990 731L935 700z" fill="#5a5c60"/>
<path d="M930 730L1010 770L1010 800L930 800z" fill="#8e8e92"/>
</g>
<path d="M1035 625C1051 664 1041 716 995 752C977 764 960 760 951 749" fill="none" stroke="#3e4044" stroke-width="0.8"/>
<path d="M1024 630C1039 668 1029 716 987 746C971 756 960 754 953 744" fill="none" stroke="#3e4044" stroke-width="0.8"/>
<path d="M1030 627C1045 666 1035 716 991 749C974 760 960 757 952 746" fill="none" stroke="#a4a4a8" stroke-width="4" opacity="0.55"/>
<path d="M920 551L933.5 558L933.5 922L920 915z" fill="#5e6065" stroke="#3a3b3f" stroke-width="0.8" stroke-linejoin="round"/>
<path d="M1160 421L1173.6 413L1173.6 769L1160 777z" fill="#505257" stroke="#3a3b3f" stroke-width="0.8" stroke-linejoin="round"/>
<path d="M1173.6 405.3L1187.5 412.2L1187.5 776L1173.6 769z" fill="#5e6065" stroke="#3a3b3f" stroke-width="0.8" stroke-linejoin="round"/>
<path d="M1037 573L1044 569L1044 851L1037 847z" fill="#5a5c61" stroke="#3a3b3f" stroke-width="0.8" stroke-linejoin="round"/>
<path d="M1044 569L1052 566L1052 853L1044 851z" fill="#4e5055" stroke="#3a3b3f" stroke-width="0.8" stroke-linejoin="round"/>
<path d="M920 551L1173.6 405.3L1187.5 412.2L933.5 558z" fill="#a0a0a4" stroke="#3a3b3f" stroke-width="0.8" stroke-linejoin="round"/>
<path d="M933.5 633.3L1175 496.4L1187 503.5L933.5 648.9z" fill="#a2a2a6" stroke="#3a3b3f" stroke-width="0.8" stroke-linejoin="round"/>
<path d="M1052 709L1175 639L1187 645L1052 722z" fill="#a2a2a6" stroke="#3a3b3f" stroke-width="0.8" stroke-linejoin="round"/>
<path d="M1052 695L1175 625L1175 639L1052 709z" fill="#505257" stroke="#3a3b3f" stroke-width="0.8" stroke-linejoin="round"/>
<path d="M933.5 889L1160 759L1160 773L933.5 904z" fill="#505257" stroke="#3a3b3f" stroke-width="0.8" stroke-linejoin="round"/>
<path d="M933.5 904L1173.6 765L1187.5 776L933.5 921z" fill="#a4a4a8" stroke="#3a3b3f" stroke-width="0.8" stroke-linejoin="round"/>
<linearGradient id="gSh" gradientUnits="userSpaceOnUse" x1="0" y1="-7" x2="0" y2="7"><stop offset="0" stop-color="#707276"/><stop offset="0.35" stop-color="#aaaaae"/><stop offset="1" stop-color="#5c5e62"/></linearGradient>
<g transform="translate(963,678) rotate(29.3)"><rect x="0" y="-7" width="126" height="14" fill="url(#gSh)" stroke="#3e4044" stroke-width="0.6"/><ellipse cx="126" cy="0" rx="4.5" ry="7" fill="#66686c" stroke="#3e4044" stroke-width="0.6"/><rect x="58" y="-11" width="18" height="22" fill="url(#gSh)" stroke="#3e4044" stroke-width="0.6"/><ellipse cx="76" cy="0" rx="4" ry="11" fill="#6c6e72" stroke="#3e4044" stroke-width="0.6"/><ellipse cx="76" cy="0" rx="2.5" ry="7" fill="#8a8c90" stroke="#3e4044" stroke-width="0.5"/></g>
<path d="M1022 688L1036 668L1047 676L1046 690L1032 702z" fill="#96989c" stroke="#3e4044" stroke-width="0.6"/>
<path d="M1035 668L1048 672L1047 680L1036 676z" fill="#b4b4b8" stroke="#3e4044" stroke-width="0.5"/>
<path d="M1033 726L1052 737L1052 743L1036 734z" fill="#5c5e62" stroke="#3e4044" stroke-width="0.5"/>
<ellipse cx="750" cy="391" rx="3" ry="2" fill="#f0f0f0" stroke="#444" stroke-width="0.6"/>
<ellipse cx="894" cy="308" rx="3" ry="2" fill="#f0f0f0" stroke="#444" stroke-width="0.6"/>
<ellipse cx="981" cy="884.5" rx="3" ry="2" fill="#f0f0f0" stroke="#444" stroke-width="0.6"/>
<ellipse cx="1125" cy="802" rx="3" ry="2" fill="#f0f0f0" stroke="#444" stroke-width="0.6"/>
<ellipse cx="981" cy="522" rx="3" ry="2" fill="#f0f0f0" stroke="#444" stroke-width="0.6"/>
<ellipse cx="1124" cy="440" rx="3" ry="2" fill="#f0f0f0" stroke="#444" stroke-width="0.6"/>
<g stroke="#1c1c8c" stroke-width="1.1" fill="none">
<path d="M686.7 388V430M903.3 514V555M686.7 404.2L763.3 448.3M825 483.3L903.3 528.3"/>
<path d="M643.4 413.2L679.9 434.8M643.4 663L679.9 685.2M656.1 421.5V510.4M656.1 584.4V670.4"/>
<path d="M1194 407.8L1231 386.7M1194 770L1231 748.5M1218.1 394V535.6M1218.1 626.3V756"/>
<path d="M932.5 929V966.7M1187.5 790V820M932.5 950.8L1030 895.8M1090.8 860L1187.5 805"/>
</g>
<path d="M686.7 404.2L696.6152408412206 407.01744548493696L694.1228852199301 411.3519770002247z" fill="#1c1c8c"/><path d="M903.3 528.3L893.3847591587794 525.4825545150629L895.8771147800699 521.1480229997753z" fill="#1c1c8c"/>
<path d="M656.1 421.5L658.6 431.5L653.6 431.5z" fill="#1c1c8c"/><path d="M656.1 670.4L653.6 660.4L658.6 660.4z" fill="#1c1c8c"/>
<path d="M1218.1 394L1220.6 404.0L1215.6 404.0z" fill="#1c1c8c"/><path d="M1218.1 756L1215.6 746.0L1220.6 746.0z" fill="#1c1c8c"/>
<path d="M932.5 950.8L939.9228852199301 943.6480229997753L942.4152408412206 947.9825545150629z" fill="#1c1c8c"/><path d="M1187.5 805L1180.0771147800697 812.1519770002246L1177.5847591587794 807.817445484937z" fill="#1c1c8c"/>
<text font-family="Liberation Sans" font-size="21" fill="#1e1e8e" stroke="#1e1e8e" stroke-width="0.35" transform="matrix(0.866,0.5,-0.1,1.1,795,466)" text-anchor="middle" dy="7.5">801.00</text>
<text font-family="Liberation Sans" font-size="21" fill="#1e1e8e" stroke="#1e1e8e" stroke-width="0.35" transform="matrix(0,-1,0.866,0.5,656,547)" text-anchor="middle" dy="7">801.00</text>
<text font-family="Liberation Sans" font-size="21" fill="#1e1e8e" stroke="#1e1e8e" stroke-width="0.35" transform="matrix(0,1,-0.866,0.5,1218,576)" text-anchor="middle" dy="7">1157.00</text>
<text font-family="Liberation Sans" font-size="21" fill="#1e1e8e" stroke="#1e1e8e" stroke-width="0.35" transform="matrix(0.866,-0.5,0,1,1060,879)" text-anchor="middle" dy="7">940.00</text>
<defs><radialGradient id="gShadow" cx="0.5" cy="0.5" r="0.5"><stop offset="0" stop-color="#000" stop-opacity="0.22"/><stop offset="1" stop-color="#000" stop-opacity="0"/></radialGradient><linearGradient id="gCubeL" x1="0" y1="0" x2="0" y2="1"><stop offset="0" stop-color="#f4f4f4"/><stop offset="1" stop-color="#e2e2e4"/></linearGradient><linearGradient id="gCubeR" x1="0" y1="0" x2="0" y2="1"><stop offset="0" stop-color="#f0f0f0"/><stop offset="1" stop-color="#dcdcde"/></linearGradient></defs>
<ellipse cx="1568" cy="262" rx="40" ry="18" fill="url(#gShadow)"/>
<path d="M1565.8 193.2L1601.6 209L1565.5 229.4L1530.4 209.5z" fill="#f2f2f3" stroke="#7a7a7c" stroke-width="0.9"/>
<path d="M1530.4 209.5L1565.5 229.4L1565.5 270.1L1534.4 248.2z" fill="url(#gCubeL)" stroke="#7a7a7c" stroke-width="0.9"/>
<path d="M1565.5 229.4L1601.6 209L1597.6 247.7L1565.5 270.1z" fill="url(#gCubeR)" stroke="#7a7a7c" stroke-width="0.9"/>
<text font-family="Liberation Sans" fill="#9a9ea4" font-size="10.5" transform="matrix(0.866,0.5,0,1,1540.5,240)" textLength="18" lengthAdjust="spacingAndGlyphs">LEFT</text>
<text font-family="Liberation Sans" fill="#9a9ea4" font-size="10.5" transform="matrix(0.866,-0.5,0,1,1572,251.5)" textLength="27" lengthAdjust="spacingAndGlyphs">FRONT</text>
<text font-family="Liberation Sans" fill="#9a9ea4" font-size="8" transform="matrix(0.866,-0.5,0.866,0.5,1559,214)" textLength="18" lengthAdjust="spacingAndGlyphs">TOP</text>
<rect x="1592.5" y="288.5" width="33.5" height="322" rx="4.5" fill="#f4f4f4" stroke="#c4c4c4" stroke-width="1.4"/>
<circle cx="1618.8" cy="296" r="3.6" fill="#b8b8b8"/><path d="M1617 294.2l3.6 3.6M1620.6 294.2l-3.6 3.6" stroke="#f4f4f4" stroke-width="0.9"/>
<path d="M1600 322a10 10 0 1 1 20 0a10 10 0 0 1-10 10h-0a10 10 0 0 1-10-10z" fill="#ececec" stroke="#9a9a9c" stroke-width="1.2"/><circle cx="1610" cy="320" r="6" fill="#e4e4e6" stroke="#9a9a9c" stroke-width="1.2"/><path d="M1602 326l4-1M1618 326l-4-1" stroke="#9a9a9c" stroke-width="1"/>
<path d="M1607 342.5h6l-3 3z" fill="#8a8a8c"/>
<path d="M1607 420.5h6l-3 3z" fill="#8a8a8c"/>
<path d="M1607 463.0h6l-3 3z" fill="#8a8a8c"/>
<path d="M1607 552.3h6l-3 3z" fill="#8a8a8c"/>
<path d="M1607 586.9h6l-3 3z" fill="#8a8a8c"/>
<path d="M1597 350H1623" stroke="#c8c8c8" stroke-width="1"/>
<path d="M1603 380c-3-3-6-7-5-9s4 0 6 3v-10c0-2 3-2 3 0v6v-8c0-2 3-2 3 0v8v-7c0-2 3-2 3 0v7v-5c0-2 3-2 3 0v9c0 4-2 7-5 9z" fill="#eeeeee" stroke="#9a9a9c" stroke-width="1.1"/>
<path d="M1599 394h9M1603.5 389.5v9M1599 401h10" stroke="#9a9a9c" stroke-width="1.8"/><circle cx="1613.5" cy="403" r="4.5" fill="#e8eef4" stroke="#9a9a9c" stroke-width="1.2"/><path d="M1616.5 406l4 4" stroke="#9a9a9c" stroke-width="2"/>
<ellipse cx="1610" cy="443" rx="10" ry="4" fill="none" stroke="#9a9a9c" stroke-width="1.1"/><ellipse cx="1610" cy="443" rx="4" ry="10.5" fill="none" stroke="#9a9a9c" stroke-width="1.1"/><path d="M1607 443h6M1610 440v6" stroke="#9a9a9c" stroke-width="1"/>
<path d="M1599 480l7-6v3l6-2v5h8.5v15.5h-21.5z" fill="#f0f0f0" stroke="#9a9a9c" stroke-width="1.1"/><rect x="1602.5" y="484" width="14.5" height="7" fill="#d8dce2" stroke="#9a9a9c" stroke-width="1"/>
<path d="M1602 508v-3h3M1615 505h3v3M1618 517v3h-3M1605 520h-3v-3" fill="none" stroke="#9a9a9c" stroke-width="1.1"/><path d="M1604.5 512.5h11M1604.5 512.5l3-2.5v5z" stroke="#9a9a9c" stroke-width="1.1" fill="#9a9a9c"/>
<path d="M1602 533l4-3.5h12v11l-4 3.5h-12z" fill="#f0f0f0" stroke="#9a9a9c" stroke-width="1.1"/><path d="M1602 533h12v11M1614 533l4-3.5" fill="none" stroke="#9a9a9c" stroke-width="1"/><rect x="1602" y="538" width="5" height="6" fill="#e0e0e0" stroke="#9a9a9c" stroke-width="0.8"/>
<path d="M1606 570l3-3h9v9l-3 3h-9z" fill="#f0f0f0" stroke="#7a8aa8" stroke-width="1"/><circle cx="1606.5" cy="567.5" r="4.8" fill="#b8c8ea" stroke="#6a7ab0" stroke-width="1"/>
<circle cx="1618.8" cy="602.5" r="3.6" fill="#b8b8b8"/><path d="M1616.5 602.5h4.6" stroke="#f4f4f4" stroke-width="1.2"/>
<path d="M1594.7 150.8h10.8v9.4h-10.8zM1600 150.8v9.4M1600 155.5h5.5" fill="none" stroke="#333" stroke-width="1.1"/><path d="M1594.7 151.3h10.8" stroke="#333" stroke-width="1.5"/>
<path d="M1615.5 150.5l10 10M1625.5 150.5l-10 10" stroke="#333" stroke-width="1.3"/>
<path d="M329.5 977V962M329.5 977L342 971M329.5 977L342 985" stroke="#1a8a1a" stroke-width="1" fill="none"/>
<path d="M329.5 977L342 971" stroke="#b01010" stroke-width="1"/><path d="M329.5 977L342 985" stroke="#1010b0" stroke-width="1"/>
<path d="M329.5 953.5L324 964.5h11z" fill="#0a9a0a"/><ellipse cx="329.5" cy="964.5" rx="5.5" ry="1.5" fill="#0a7a0a"/>
<path d="M351 966L340.5 966.5L342.5 975.5z" fill="#a81010"/><path d="M340.5 966.5L342.5 975.5L345 969z" fill="#c82020"/>
<path d="M350.5 990.5L340 981L340.5 992.5z" fill="#1010a0"/><path d="M340 981L340.5 992.5L344 986z" fill="#2020c0"/>
<text x="324.5" y="952.5" font-family="Liberation Sans" font-size="10.5" fill="#30d030">Y</text>
<text x="351" y="968" font-family="Liberation Sans" font-size="10.5" fill="#ff3030">X</text>
<text x="351.5" y="998" font-family="Liberation Sans" font-size="10.5" fill="#3a4aff">Z</text>
</svg>
<!-- RIGHT PANEL -->
<div class="a" style="left:1632px;top:144px;width:288px;height:911px;background:#3b4453"></div>
<div class="a" style="left:1632px;top:144px;width:288px;height:24px;background:#222832"></div>
<div class="a" style="left:1632px;top:144px;width:58px;height:24px;background:#3b4453"></div>
<div class="t" style="left:1635px;top:149px;font-size:11px;color:#f4f4f4">Model</div>
<svg style="left:1632px;top:144px" width="288" height="24"><path d="M42 8l8.5 8.5M50.5 8l-8.5 8.5" stroke="#e8e8e8" stroke-width="1.4"/><path d="M68 7v10M63 12h10" stroke="#a8a8a8" stroke-width="2"/><circle cx="253" cy="11" r="5.2" fill="none" stroke="#a5a5a5" stroke-width="1.5"/><path d="M256.5 14.5l4 4" stroke="#a5a5a5" stroke-width="1.6"/><path d="M269 7h14M269 12h14M269 17h14" stroke="#a5a5a5" stroke-width="2"/></svg>
<div class="a" style="left:1902px;top:168px;width:17px;height:886px;background:#363c4a"></div>
<div class="a" style="left:1902px;top:186px;width:17px;height:797px;background:#556070"></div>
<svg style="left:1902px;top:168px" width="17" height="886"><path d="M3.5 13l5-5 5 5" fill="none" stroke="#8a96a8" stroke-width="1.3"/><path d="M4.5 874l4 4 4-4" fill="none" stroke="#8a96a8" stroke-width="1.3"/></svg>
<div class="a" style="left:1919px;top:144px;width:1px;height:911px;background:#2a2f38"></div>
<div class="a" style="left:1632px;top:168px;width:270px;height:887px;overflow:hidden">
<div class="a" style="left:-1632px;top:-168px;width:1920px;height:1080px">
<svg style="left:1632px;top:168px" width="270" height="887">
<path d="M3.5 8l4-4h10v10l-4 4h-10z" fill="#8ccff8"/><path d="M3.5 8l4-4h10l-4 4z" fill="#b8e4fd"/><path d="M13.5 8l4-4v10l-4 4z" fill="#5aaee4"/>
<path d="M9.5 22V42" stroke="#8a919c" stroke-width="1" stroke-dasharray="1 2"/>
<path d="M13 32.5H18" stroke="#8a919c" stroke-width="1" stroke-dasharray="1 2"/>
<path d="M5 31h8M9 27v8" stroke="#d0d6e0" stroke-width="1.8"/>
<path d="M18.5 25h6l2 2h8v12h-16z" fill="#fbe5a3"/><path d="M18.5 27.5h16" stroke="#3b4453" stroke-width="0.5"/><path d="M23.5 31l2-2h5v5l-2 2h-5z" fill="#5aaae6"/><path d="M23.5 31h5v5h-5z" fill="#4a8fd0"/>
<path d="M9.5 42V62" stroke="#8a919c" stroke-width="1" stroke-dasharray="1 2"/>
<path d="M13 52.5H18" stroke="#8a919c" stroke-width="1" stroke-dasharray="1 2"/>
<path d="M5 51h8M9 47v8" stroke="#d0d6e0" stroke-width="1.8"/>
<rect x="18.5" y="45" width="5" height="3" fill="#6ec0f5"/><path d="M21.5 50h-1.5v10h1.5" fill="none" stroke="#e0e0e0" stroke-width="1"/><rect x="24.0" y="49" width="5" height="3" fill="#6ec0f5"/><rect x="29.5" y="53" width="5" height="3" fill="#6ec0f5"/><rect x="24.0" y="57" width="5" height="3" fill="#6ec0f5"/>
<path d="M9.5 62V82" stroke="#8a919c" stroke-width="1" stroke-dasharray="1 2"/>
<path d="M13 72.5H18" stroke="#8a919c" stroke-width="1" stroke-dasharray="1 2"/>
<path d="M5 71h8" stroke="#f0f0f0" stroke-width="1.8"/>
<path d="M18.5 65h6l2 2h7v10h-15z" fill="#fbe5a3"/><path d="M21.5 70h13l-3 7h-13z" fill="#fff0c0" stroke="#3b4453" stroke-width="0.6"/><path d="M22.5 77v4M33.5 77v4M22.5 79h11" stroke="#e0e0e0" stroke-width="1"/>
<path d="M9.5 82V102" stroke="#8a919c" stroke-width="1" stroke-dasharray="1 2"/>
<path d="M26.5 82V92.5H34" stroke="#8a919c" stroke-width="1" stroke-dasharray="1 2" fill="none"/>
<path d="M35.5 91l8-4 8 4-8 4z" fill="#f0f0f0"/><path d="M35.5 91l8 4v4l-8-4z" fill="#d6d6d6"/><path d="M43.5 95l8-4v4l-8 4z" fill="#bdbdbd"/><path d="M35.5 84v4M50.5 84v4M35.5 86h15" stroke="#e0e0e0" stroke-width="1"/>
<path d="M9.5 102V122" stroke="#8a919c" stroke-width="1" stroke-dasharray="1 2"/>
<path d="M26.5 102V112.5H34" stroke="#8a919c" stroke-width="1" stroke-dasharray="1 2" fill="none"/>
<path d="M35.5 111l8-4 8 4-8 4z" fill="#f0f0f0"/><path d="M35.5 111l8 4v4l-8-4z" fill="#d6d6d6"/><path d="M43.5 115l8-4v4l-8 4z" fill="#bdbdbd"/><path d="M35.5 104v4M50.5 104v4M35.5 106h15" stroke="#e0e0e0" stroke-width="1"/>
<path d="M9.5 122V142" stroke="#8a919c" stroke-width="1" stroke-dasharray="1 2"/>
<path d="M26.5 122V132.5H34" stroke="#8a919c" stroke-width="1" stroke-dasharray="1 2" fill="none"/>
<path d="M35.5 131l8-4 8 4-8 4z" fill="#f0f0f0"/><path d="M35.5 131l8 4v4l-8-4z" fill="#d6d6d6"/><path d="M43.5 135l8-4v4l-8 4z" fill="#bdbdbd"/><path d="M35.5 124v4M50.5 124v4M35.5 126h15" stroke="#e0e0e0" stroke-width="1"/>
<path d="M9.5 142V162" stroke="#8a919c" stroke-width="1" stroke-dasharray="1 2"/>
<path d="M26.5 142V152.5H34" stroke="#8a919c" stroke-width="1" stroke-dasharray="1 2" fill="none"/>
<path d="M35.5 151l8-4 8 4-8 4z" fill="#f0f0f0"/><path d="M35.5 151l8 4v4l-8-4z" fill="#d6d6d6"/><path d="M43.5 155l8-4v4l-8 4z" fill="#bdbdbd"/><path d="M35.5 144v4M50.5 144v4M35.5 146h15" stroke="#e0e0e0" stroke-width="1"/>
<path d="M9.5 162V182" stroke="#8a919c" stroke-width="1" stroke-dasharray="1 2"/>
<path d="M13 172.5H18" stroke="#8a919c" stroke-width="1" stroke-dasharray="1 2"/>
<path d="M5 171h8M9 167v8" stroke="#d0d6e0" stroke-width="1.8"/>
<path d="M18.5 165h6l2 2h8v12h-16z" fill="#fbe5a3"/><path d="M18.5 167.5h16" stroke="#3b4453" stroke-width="0.5"/>
<path d="M9.5 182V202" stroke="#8a919c" stroke-width="1" stroke-dasharray="1 2"/>
<path d="M13 192.5H18" stroke="#8a919c" stroke-width="1" stroke-dasharray="1 2"/>
<path d="M10 192.5H18" stroke="#8a919c" stroke-width="1" stroke-dasharray="1 2"/>
<rect x="19.0" y="185.5" width="13" height="13" fill="none" stroke="#e0e0e0" stroke-width="1" stroke-dasharray="2 2"/><circle cx="33.5" cy="193" r="2" fill="#a8a8a8"/><circle cx="28.5" cy="196" r="2" fill="#a8a8a8"/><circle cx="33.5" cy="199" r="2" fill="#a8a8a8"/><path d="M33.5 193l-5 3 5 3" stroke="#a8a8a8" stroke-width="1.2" fill="none"/>
<path d="M9.5 202V222" stroke="#8a919c" stroke-width="1" stroke-dasharray="1 2"/>
<path d="M13 212.5H18" stroke="#8a919c" stroke-width="1" stroke-dasharray="1 2"/>
<path d="M5 211h8M9 207v8" stroke="#d0d6e0" stroke-width="1.8"/>
<path d="M19.5 205.5l2.5-2.5h9.5v12.5l-2.5 2.5h-9.5z" fill="#8ccff8"/><path d="M19.5 205.5l2.5-2.5h9.5l-2.5 2.5z" fill="#c0e6fd"/><path d="M29.0 205.5l2.5-2.5v12.5l-2.5 2.5z" fill="#5aaee4"/><path d="M19.5 218.0h9.5l2.5-2.5v2.5l-2.5 2.5h-9.5z" fill="#f0f0f0"/><path d="M29.0 218.0l2.5-2.5v2.5l-2.5 2.5z" fill="#b8b8b8"/><path d="M34.5 205.5v11" stroke="#fff" stroke-width="1.2"/><path d="M34.5 203.0l-2 3h4z" fill="#fff"/>
<path d="M9.5 222V242" stroke="#8a919c" stroke-width="1" stroke-dasharray="1 2"/>
<path d="M13 232.5H18" stroke="#8a919c" stroke-width="1" stroke-dasharray="1 2"/>
<path d="M10 232.5H18" stroke="#8a919c" stroke-width="1" stroke-dasharray="1 2"/>
<path d="M19.5 227l3-2h6a7 7 0 0 1 6 6v6l-3 3h-12z" fill="#dedede"/><path d="M27.5 225a7 7 0 0 1 7 6l-3 3a5 5 0 0 0-4-5z" fill="#6ec0f5"/><path d="M31.5 234l3-3v6l-3 3z" fill="#bdbdbd"/>
<path d="M9.5 242V262" stroke="#8a919c" stroke-width="1" stroke-dasharray="1 2"/>
<path d="M13 252.5H18" stroke="#8a919c" stroke-width="1" stroke-dasharray="1 2"/>
<path d="M10 252.5H18" stroke="#8a919c" stroke-width="1" stroke-dasharray="1 2"/>
<path d="M19.5 248l3-3h12v12l-3 3h-12z" fill="#f0f0f0"/><path d="M31.5 248l3-3v12l-3 3z" fill="#c4c4c4"/><rect x="19.5" y="248" width="12" height="12" fill="#e8e8e8" stroke="#cfcfcf" stroke-width="0.5"/><rect x="21.5" y="250" width="8" height="8" fill="#3b4453"/><path d="M22.5 251h3v4h3v2h-6z" fill="#6ec0f5"/>
<path d="M9.5 262V282" stroke="#8a919c" stroke-width="1" stroke-dasharray="1 2"/>
<path d="M13 272.5H18" stroke="#8a919c" stroke-width="1" stroke-dasharray="1 2"/>
<path d="M5 271h8M9 267v8" stroke="#d0d6e0" stroke-width="1.8"/>
<path d="M19.5 265.5l2.5-2.5h9.5v12.5l-2.5 2.5h-9.5z" fill="#8ccff8"/><path d="M19.5 265.5l2.5-2.5h9.5l-2.5 2.5z" fill="#c0e6fd"/><path d="M29.0 265.5l2.5-2.5v12.5l-2.5 2.5z" fill="#5aaee4"/><path d="M19.5 278.0h9.5l2.5-2.5v2.5l-2.5 2.5h-9.5z" fill="#f0f0f0"/><path d="M29.0 278.0l2.5-2.5v2.5l-2.5 2.5z" fill="#b8b8b8"/><path d="M34.5 265.5v11" stroke="#fff" stroke-width="1.2"/><path d="M34.5 263.0l-2 3h4z" fill="#fff"/>
<path d="M9.5 282V302" stroke="#8a919c" stroke-width="1" stroke-dasharray="1 2"/>
<path d="M13 292.5H18" stroke="#8a919c" stroke-width="1" stroke-dasharray="1 2"/>
<path d="M5 291h8M9 287v8" stroke="#d0d6e0" stroke-width="1.8"/>
<path d="M19.5 285.5l2.5-2.5h9.5v12.5l-2.5 2.5h-9.5z" fill="#8ccff8"/><path d="M19.5 285.5l2.5-2.5h9.5l-2.5 2.5z" fill="#c0e6fd"/><path d="M29.0 285.5l2.5-2.5v12.5l-2.5 2.5z" fill="#5aaee4"/><path d="M19.5 298.0h9.5l2.5-2.5v2.5l-2.5 2.5h-9.5z" fill="#f0f0f0"/><path d="M29.0 298.0l2.5-2.5v2.5l-2.5 2.5z" fill="#b8b8b8"/><path d="M34.5 285.5v11" stroke="#fff" stroke-width="1.2"/><path d="M34.5 283.0l-2 3h4z" fill="#fff"/>
<path d="M9.5 302V322" stroke="#8a919c" stroke-width="1" stroke-dasharray="1 2"/>
<path d="M13 312.5H18" stroke="#8a919c" stroke-width="1" stroke-dasharray="1 2"/>
<path d="M5 311h8M9 307v8" stroke="#d0d6e0" stroke-width="1.8"/>
<path d="M19.5 305.5l2.5-2.5h9.5v12.5l-2.5 2.5h-9.5z" fill="#8ccff8"/><path d="M19.5 305.5l2.5-2.5h9.5l-2.5 2.5z" fill="#c0e6fd"/><path d="M29.0 305.5l2.5-2.5v12.5l-2.5 2.5z" fill="#5aaee4"/><path d="M19.5 318.0h9.5l2.5-2.5v2.5l-2.5 2.5h-9.5z" fill="#f0f0f0"/><path d="M29.0 318.0l2.5-2.5v2.5l-2.5 2.5z" fill="#b8b8b8"/><path d="M34.5 305.5v11" stroke="#fff" stroke-width="1.2"/><path d="M34.5 303.0l-2 3h4z" fill="#fff"/>
<path d="M9.5 322V342" stroke="#8a919c" stroke-width="1" stroke-dasharray="1 2"/>
<path d="M13 332.5H18" stroke="#8a919c" stroke-width="1" stroke-dasharray="1 2"/>
<path d="M5 331h8M9 327v8" stroke="#d0d6e0" stroke-width="1.8"/>
<path d="M19.5 325.5l2.5-2.5h9.5v12.5l-2.5 2.5h-9.5z" fill="#8ccff8"/><path d="M19.5 325.5l2.5-2.5h9.5l-2.5 2.5z" fill="#c0e6fd"/><path d="M29.0 325.5l2.5-2.5v12.5l-2.5 2.5z" fill="#5aaee4"/><path d="M19.5 338.0h9.5l2.5-2.5v2.5l-2.5 2.5h-9.5z" fill="#f0f0f0"/><path d="M29.0 338.0l2.5-2.5v2.5l-2.5 2.5z" fill="#b8b8b8"/><path d="M34.5 325.5v11" stroke="#fff" stroke-width="1.2"/><path d="M34.5 323.0l-2 3h4z" fill="#fff"/>
<path d="M9.5 342V362" stroke="#8a919c" stroke-width="1" stroke-dasharray="1 2"/>
<path d="M13 352.5H18" stroke="#8a919c" stroke-width="1" stroke-dasharray="1 2"/>
<path d="M5 351h8M9 347v8" stroke="#d0d6e0" stroke-width="1.8"/>
<path d="M19.5 345.5l2.5-2.5h9.5v12.5l-2.5 2.5h-9.5z" fill="#8ccff8"/><path d="M19.5 345.5l2.5-2.5h9.5l-2.5 2.5z" fill="#c0e6fd"/><path d="M29.0 345.5l2.5-2.5v12.5l-2.5 2.5z" fill="#5aaee4"/><path d="M19.5 358.0h9.5l2.5-2.5v2.5l-2.5 2.5h-9.5z" fill="#f0f0f0"/><path d="M29.0 358.0l2.5-2.5v2.5l-2.5 2.5z" fill="#b8b8b8"/><path d="M34.5 345.5v11" stroke="#fff" stroke-width="1.2"/><path d="M34.5 343.0l-2 3h4z" fill="#fff"/>
<path d="M9.5 362V382" stroke="#8a919c" stroke-width="1" stroke-dasharray="1 2"/>
<path d="M13 372.5H18" stroke="#8a919c" stroke-width="1" stroke-dasharray="1 2"/>
<path d="M5 371h8M9 367v8" stroke="#d0d6e0" stroke-width="1.8"/>
<path d="M19.5 365.5l2.5-2.5h9.5v12.5l-2.5 2.5h-9.5z" fill="#8ccff8"/><path d="M19.5 365.5l2.5-2.5h9.5l-2.5 2.5z" fill="#c0e6fd"/><path d="M29.0 365.5l2.5-2.5v12.5l-2.5 2.5z" fill="#5aaee4"/><path d="M19.5 378.0h9.5l2.5-2.5v2.5l-2.5 2.5h-9.5z" fill="#f0f0f0"/><path d="M29.0 378.0l2.5-2.5v2.5l-2.5 2.5z" fill="#b8b8b8"/><path d="M34.5 365.5v11" stroke="#fff" stroke-width="1.2"/><path d="M34.5 363.0l-2 3h4z" fill="#fff"/>
<path d="M9.5 382V402" stroke="#8a919c" stroke-width="1" stroke-dasharray="1 2"/>
<path d="M13 392.5H18" stroke="#8a919c" stroke-width="1" stroke-dasharray="1 2"/>
<path d="M5 391h8M9 387v8" stroke="#d0d6e0" stroke-width="1.8"/>
<path d="M19.5 385.5l2.5-2.5h9.5v12.5l-2.5 2.5h-9.5z" fill="#8ccff8"/><path d="M19.5 385.5l2.5-2.5h9.5l-2.5 2.5z" fill="#c0e6fd"/><path d="M29.0 385.5l2.5-2.5v12.5l-2.5 2.5z" fill="#5aaee4"/><path d="M19.5 398.0h9.5l2.5-2.5v2.5l-2.5 2.5h-9.5z" fill="#f0f0f0"/><path d="M29.0 398.0l2.5-2.5v2.5l-2.5 2.5z" fill="#b8b8b8"/><path d="M34.5 385.5v11" stroke="#fff" stroke-width="1.2"/><path d="M34.5 383.0l-2 3h4z" fill="#fff"/>
<path d="M9.5 402V422" stroke="#8a919c" stroke-width="1" stroke-dasharray="1 2"/>
<path d="M13 412.5H18" stroke="#8a919c" stroke-width="1" stroke-dasharray="1 2"/>
<path d="M5 411h8M9 407v8" stroke="#d0d6e0" stroke-width="1.8"/>
<path d="M19.5 405.5l2.5-2.5h9.5v12.5l-2.5 2.5h-9.5z" fill="#8ccff8"/><path d="M19.5 405.5l2.5-2.5h9.5l-2.5 2.5z" fill="#c0e6fd"/><path d="M29.0 405.5l2.5-2.5v12.5l-2.5 2.5z" fill="#5aaee4"/><path d="M19.5 418.0h9.5l2.5-2.5v2.5l-2.5 2.5h-9.5z" fill="#f0f0f0"/><path d="M29.0 418.0l2.5-2.5v2.5l-2.5 2.5z" fill="#b8b8b8"/><path d="M34.5 405.5v11" stroke="#fff" stroke-width="1.2"/><path d="M34.5 403.0l-2 3h4z" fill="#fff"/>
<path d="M9.5 422V442" stroke="#8a919c" stroke-width="1" stroke-dasharray="1 2"/>
<path d="M13 432.5H18" stroke="#8a919c" stroke-width="1" stroke-dasharray="1 2"/>
<path d="M5 431h8M9 427v8" stroke="#d0d6e0" stroke-width="1.8"/>
<path d="M19.5 425.5l2.5-2.5h9.5v12.5l-2.5 2.5h-9.5z" fill="#8ccff8"/><path d="M19.5 425.5l2.5-2.5h9.5l-2.5 2.5z" fill="#c0e6fd"/><path d="M29.0 425.5l2.5-2.5v12.5l-2.5 2.5z" fill="#5aaee4"/><path d="M19.5 438.0h9.5l2.5-2.5v2.5l-2.5 2.5h-9.5z" fill="#f0f0f0"/><path d="M29.0 438.0l2.5-2.5v2.5l-2.5 2.5z" fill="#b8b8b8"/><path d="M34.5 425.5v11" stroke="#fff" stroke-width="1.2"/><path d="M34.5 423.0l-2 3h4z" fill="#fff"/>
<path d="M9.5 442V462" stroke="#8a919c" stroke-width="1" stroke-dasharray="1 2"/>
<path d="M13 452.5H18" stroke="#8a919c" stroke-width="1" stroke-dasharray="1 2"/>
<path d="M5 451h8M9 447v8" stroke="#d0d6e0" stroke-width="1.8"/>
<path d="M26.5 444v15M19.5 459h7" stroke="#6ec0f5" stroke-width="1"/><path d="M28.5 458l4-4" stroke="#6ec0f5" stroke-width="1"/><rect x="25.5" y="458" width="2" height="2" fill="#6ec0f5"/>
<path d="M9.5 462V482" stroke="#8a919c" stroke-width="1" stroke-dasharray="1 2"/>
<path d="M13 472.5H18" stroke="#8a919c" stroke-width="1" stroke-dasharray="1 2"/>
<path d="M5 471h8M9 467v8" stroke="#d0d6e0" stroke-width="1.8"/>
<path d="M19.5 479l7-14v14z" fill="#dedede"/><path d="M27.5 465l7 14h-7z" fill="#6ec0f5"/>
<path d="M9.5 482V502" stroke="#8a919c" stroke-width="1" stroke-dasharray="1 2"/>
<path d="M13 492.5H18" stroke="#8a919c" stroke-width="1" stroke-dasharray="1 2"/>
<path d="M5 491h8M9 487v8" stroke="#d0d6e0" stroke-width="1.8"/>
<path d="M19.5 485.5l2.5-2.5h9.5v12.5l-2.5 2.5h-9.5z" fill="#8ccff8"/><path d="M19.5 485.5l2.5-2.5h9.5l-2.5 2.5z" fill="#c0e6fd"/><path d="M29.0 485.5l2.5-2.5v12.5l-2.5 2.5z" fill="#5aaee4"/><path d="M19.5 498.0h9.5l2.5-2.5v2.5l-2.5 2.5h-9.5z" fill="#f0f0f0"/><path d="M29.0 498.0l2.5-2.5v2.5l-2.5 2.5z" fill="#b8b8b8"/><path d="M34.5 485.5v11" stroke="#fff" stroke-width="1.2"/><path d="M34.5 483.0l-2 3h4z" fill="#fff"/>
<path d="M9.5 502V522" stroke="#8a919c" stroke-width="1" stroke-dasharray="1 2"/>
<path d="M13 512.5H18" stroke="#8a919c" stroke-width="1" stroke-dasharray="1 2"/>
<path d="M5 511h8M9 507v8" stroke="#d0d6e0" stroke-width="1.8"/>
<path d="M26.5 504v15M19.5 519h7" stroke="#d8d8d8" stroke-width="1"/><path d="M28.5 518l4-4" stroke="#d8d8d8" stroke-width="1"/><rect x="25.5" y="518" width="2" height="2" fill="#d8d8d8"/>
<path d="M9.5 522V542" stroke="#8a919c" stroke-width="1" stroke-dasharray="1 2"/>
<path d="M13 532.5H18" stroke="#8a919c" stroke-width="1" stroke-dasharray="1 2"/>
<path d="M10 532.5H18" stroke="#8a919c" stroke-width="1" stroke-dasharray="1 2"/>
<rect x="20.0" y="527.5" width="12" height="12" fill="none" stroke="#e0e0e0" stroke-width="1" stroke-dasharray="2 2"/><path d="M19.5 524l3 3-3 1z" fill="#f0f0f0"/><path d="M18.5 525h5v2h-5z" fill="#f0f0f0"/>
<path d="M9.5 542V562" stroke="#8a919c" stroke-width="1" stroke-dasharray="1 2"/>
<path d="M13 552.5H18" stroke="#8a919c" stroke-width="1" stroke-dasharray="1 2"/>
<path d="M5 551h8M9 547v8" stroke="#d0d6e0" stroke-width="1.8"/>
<path d="M26.5 544v15M19.5 559h7" stroke="#d8d8d8" stroke-width="1"/><path d="M28.5 558l4-4" stroke="#d8d8d8" stroke-width="1"/><rect x="25.5" y="558" width="2" height="2" fill="#d8d8d8"/>
<path d="M9.5 562V582" stroke="#8a919c" stroke-width="1" stroke-dasharray="1 2"/>
<path d="M13 572.5H18" stroke="#8a919c" stroke-width="1" stroke-dasharray="1 2"/>
<path d="M5 571h8M9 567v8" stroke="#d0d6e0" stroke-width="1.8"/>
<path d="M19.5 570q8-5 16 0v7q-8-4-16 0z" fill="#6ec0f5"/><path d="M31.5 570l4 0v7l-4-1z" fill="#d0d0d0"/><path d="M20.5 567q7-5 14 0" fill="none" stroke="#e0e0e0" stroke-width="1"/><path d="M19.5 577q8-4 16 0v2q-8-4-16 0z" fill="#e8e8e8"/>
<path d="M9.5 582V602" stroke="#8a919c" stroke-width="1" stroke-dasharray="1 2"/>
<path d="M13 592.5H18" stroke="#8a919c" stroke-width="1" stroke-dasharray="1 2"/>
<path d="M5 591h8M9 587v8" stroke="#d0d6e0" stroke-width="1.8"/>
<path d="M19.5 585.5l2.5-2.5h9.5v12.5l-2.5 2.5h-9.5z" fill="#8ccff8"/><path d="M19.5 585.5l2.5-2.5h9.5l-2.5 2.5z" fill="#c0e6fd"/><path d="M29.0 585.5l2.5-2.5v12.5l-2.5 2.5z" fill="#5aaee4"/><path d="M19.5 598.0h9.5l2.5-2.5v2.5l-2.5 2.5h-9.5z" fill="#f0f0f0"/><path d="M29.0 598.0l2.5-2.5v2.5l-2.5 2.5z" fill="#b8b8b8"/><path d="M34.5 585.5v11" stroke="#fff" stroke-width="1.2"/><path d="M34.5 583.0l-2 3h4z" fill="#fff"/>
<path d="M9.5 602V622" stroke="#8a919c" stroke-width="1" stroke-dasharray="1 2"/>
<path d="M13 612.5H18" stroke="#8a919c" stroke-width="1" stroke-dasharray="1 2"/>
<path d="M5 611h8M9 607v8" stroke="#d0d6e0" stroke-width="1.8"/>
<circle cx="22.5" cy="607" r="1.9" fill="#6ec0f5"/><circle cx="30.5" cy="607" r="1.9" fill="#6ec0f5"/><circle cx="34.5" cy="613" r="1.9" fill="#6ec0f5"/><circle cx="30.5" cy="619" r="1.9" fill="#6ec0f5"/><circle cx="22.5" cy="619" r="1.9" fill="#6ec0f5"/><circle cx="26.5" cy="613" r="1.9" fill="#6ec0f5"/>
<path d="M9.5 622V642" stroke="#8a919c" stroke-width="1" stroke-dasharray="1 2"/>
<path d="M13 632.5H18" stroke="#8a919c" stroke-width="1" stroke-dasharray="1 2"/>
<path d="M5 631h8M9 627v8" stroke="#d0d6e0" stroke-width="1.8"/>
<path d="M19.5 639l7-14v14z" fill="#dedede"/><path d="M27.5 625l7 14h-7z" fill="#6ec0f5"/>
<path d="M9.5 642V662" stroke="#8a919c" stroke-width="1" stroke-dasharray="1 2"/>
<path d="M13 652.5H18" stroke="#8a919c" stroke-width="1" stroke-dasharray="1 2"/>
<path d="M5 651h8M9 647v8" stroke="#d0d6e0" stroke-width="1.8"/>
<path d="M19.5 659l7-14v14z" fill="#dedede"/><path d="M27.5 645l7 14h-7z" fill="#6ec0f5"/>
<path d="M9.5 662V682" stroke="#8a919c" stroke-width="1" stroke-dasharray="1 2"/>
<path d="M13 672.5H18" stroke="#8a919c" stroke-width="1" stroke-dasharray="1 2"/>
<path d="M10 672.5H18" stroke="#8a919c" stroke-width="1" stroke-dasharray="1 2"/>
<rect x="19.0" y="665.5" width="13" height="13" fill="none" stroke="#e0e0e0" stroke-width="1" stroke-dasharray="2 2"/><circle cx="33.5" cy="673" r="2" fill="#a8a8a8"/><circle cx="28.5" cy="676" r="2" fill="#a8a8a8"/><circle cx="33.5" cy="679" r="2" fill="#a8a8a8"/><path d="M33.5 673l-5 3 5 3" stroke="#a8a8a8" stroke-width="1.2" fill="none"/>
<path d="M9.5 682V702" stroke="#8a919c" stroke-width="1" stroke-dasharray="1 2"/>
<path d="M13 692.5H18" stroke="#8a919c" stroke-width="1" stroke-dasharray="1 2"/>
<path d="M5 691h8M9 687v8" stroke="#d0d6e0" stroke-width="1.8"/>
<path d="M19.5 685.5l2.5-2.5h9.5v12.5l-2.5 2.5h-9.5z" fill="#8ccff8"/><path d="M19.5 685.5l2.5-2.5h9.5l-2.5 2.5z" fill="#c0e6fd"/><path d="M29.0 685.5l2.5-2.5v12.5l-2.5 2.5z" fill="#5aaee4"/><path d="M19.5 698.0h9.5l2.5-2.5v2.5l-2.5 2.5h-9.5z" fill="#f0f0f0"/><path d="M29.0 698.0l2.5-2.5v2.5l-2.5 2.5z" fill="#b8b8b8"/><path d="M34.5 685.5v11" stroke="#fff" stroke-width="1.2"/><path d="M34.5 683.0l-2 3h4z" fill="#fff"/>
<path d="M9.5 702V722" stroke="#8a919c" stroke-width="1" stroke-dasharray="1 2"/>
<path d="M13 712.5H18" stroke="#8a919c" stroke-width="1" stroke-dasharray="1 2"/>
<path d="M5 711h8M9 707v8" stroke="#d0d6e0" stroke-width="1.8"/>
<path d="M26.5 704v15M19.5 719h7" stroke="#d8d8d8" stroke-width="1"/><path d="M28.5 718l4-4" stroke="#d8d8d8" stroke-width="1"/><rect x="25.5" y="718" width="2" height="2" fill="#d8d8d8"/>
<path d="M9.5 722V742" stroke="#8a919c" stroke-width="1" stroke-dasharray="1 2"/>
<path d="M13 732.5H18" stroke="#8a919c" stroke-width="1" stroke-dasharray="1 2"/>
<path d="M5 731h8M9 727v8" stroke="#d0d6e0" stroke-width="1.8"/>
<path d="M19.5 739l7-14v14z" fill="#dedede"/><path d="M27.5 725l7 14h-7z" fill="#6ec0f5"/>
<path d="M9.5 742V762" stroke="#8a919c" stroke-width="1" stroke-dasharray="1 2"/>
<path d="M13 752.5H18" stroke="#8a919c" stroke-width="1" stroke-dasharray="1 2"/>
<path d="M5 751h8M9 747v8" stroke="#d0d6e0" stroke-width="1.8"/>
<path d="M19.5 759l7-14v14z" fill="#dedede"/><path d="M27.5 745l7 14h-7z" fill="#6ec0f5"/>
<path d="M9.5 762V782" stroke="#8a919c" stroke-width="1" stroke-dasharray="1 2"/>
<path d="M13 772.5H18" stroke="#8a919c" stroke-width="1" stroke-dasharray="1 2"/>
<path d="M5 771h8M9 767v8" stroke="#d0d6e0" stroke-width="1.8"/>
<path d="M19.5 765.5l2.5-2.5h9.5v12.5l-2.5 2.5h-9.5z" fill="#8ccff8"/><path d="M19.5 765.5l2.5-2.5h9.5l-2.5 2.5z" fill="#c0e6fd"/><path d="M29.0 765.5l2.5-2.5v12.5l-2.5 2.5z" fill="#5aaee4"/><path d="M19.5 778.0h9.5l2.5-2.5v2.5l-2.5 2.5h-9.5z" fill="#f0f0f0"/><path d="M29.0 778.0l2.5-2.5v2.5l-2.5 2.5z" fill="#b8b8b8"/><path d="M34.5 765.5v11" stroke="#fff" stroke-width="1.2"/><path d="M34.5 763.0l-2 3h4z" fill="#fff"/>
<path d="M9.5 782V802" stroke="#8a919c" stroke-width="1" stroke-dasharray="1 2"/>
<path d="M13 792.5H18" stroke="#8a919c" stroke-width="1" stroke-dasharray="1 2"/>
<path d="M5 791h8M9 787v8" stroke="#d0d6e0" stroke-width="1.8"/>
<path d="M19.5 799l7-14v14z" fill="#dedede"/><path d="M27.5 785l7 14h-7z" fill="#6ec0f5"/>
<path d="M9.5 802V822" stroke="#8a919c" stroke-width="1" stroke-dasharray="1 2"/>
<path d="M13 812.5H18" stroke="#8a919c" stroke-width="1" stroke-dasharray="1 2"/>
<path d="M5 811h8M9 807v8" stroke="#d0d6e0" stroke-width="1.8"/>
<path d="M19.5 819l7-14v14z" fill="#dedede"/><path d="M27.5 805l7 14h-7z" fill="#6ec0f5"/>
<path d="M9.5 822V842" stroke="#8a919c" stroke-width="1" stroke-dasharray="1 2"/>
<path d="M13 832.5H18" stroke="#8a919c" stroke-width="1" stroke-dasharray="1 2"/>
<path d="M5 831h8M9 827v8" stroke="#d0d6e0" stroke-width="1.8"/>
<path d="M19.5 839l7-14v14z" fill="#dedede"/><path d="M27.5 825l7 14h-7z" fill="#6ec0f5"/>
<path d="M9.5 842V862" stroke="#8a919c" stroke-width="1" stroke-dasharray="1 2"/>
<path d="M13 852.5H18" stroke="#8a919c" stroke-width="1" stroke-dasharray="1 2"/>
<path d="M5 851h8M9 847v8" stroke="#d0d6e0" stroke-width="1.8"/>
<path d="M19.5 845.5l2.5-2.5h9.5v12.5l-2.5 2.5h-9.5z" fill="#8ccff8"/><path d="M19.5 845.5l2.5-2.5h9.5l-2.5 2.5z" fill="#c0e6fd"/><path d="M29.0 845.5l2.5-2.5v12.5l-2.5 2.5z" fill="#5aaee4"/><path d="M19.5 858.0h9.5l2.5-2.5v2.5l-2.5 2.5h-9.5z" fill="#f0f0f0"/><path d="M29.0 858.0l2.5-2.5v2.5l-2.5 2.5z" fill="#b8b8b8"/><path d="M34.5 845.5v11" stroke="#fff" stroke-width="1.2"/><path d="M34.5 843.0l-2 3h4z" fill="#fff"/>
<path d="M9.5 862V882" stroke="#8a919c" stroke-width="1" stroke-dasharray="1 2"/>
<path d="M13 872.5H18" stroke="#8a919c" stroke-width="1" stroke-dasharray="1 2"/>
<path d="M5 871h8M9 867v8" stroke="#d0d6e0" stroke-width="1.8"/>
<path d="M19.5 865.5l2.5-2.5h9.5v12.5l-2.5 2.5h-9.5z" fill="#8ccff8"/><path d="M19.5 865.5l2.5-2.5h9.5l-2.5 2.5z" fill="#c0e6fd"/><path d="M29.0 865.5l2.5-2.5v12.5l-2.5 2.5z" fill="#5aaee4"/><path d="M19.5 878.0h9.5l2.5-2.5v2.5l-2.5 2.5h-9.5z" fill="#f0f0f0"/><path d="M29.0 878.0l2.5-2.5v2.5l-2.5 2.5z" fill="#b8b8b8"/><path d="M34.5 865.5v11" stroke="#fff" stroke-width="1.2"/><path d="M34.5 863.0l-2 3h4z" fill="#fff"/>
<path d="M9.5 882V902" stroke="#8a919c" stroke-width="1" stroke-dasharray="1 2"/>
<path d="M13 892.5H18" stroke="#8a919c" stroke-width="1" stroke-dasharray="1 2"/>
<path d="M5 891h8M9 887v8" stroke="#d0d6e0" stroke-width="1.8"/>
<path d="M19.5 885.5l2.5-2.5h9.5v12.5l-2.5 2.5h-9.5z" fill="#8ccff8"/><path d="M19.5 885.5l2.5-2.5h9.5l-2.5 2.5z" fill="#c0e6fd"/><path d="M29.0 885.5l2.5-2.5v12.5l-2.5 2.5z" fill="#5aaee4"/><path d="M19.5 898.0h9.5l2.5-2.5v2.5l-2.5 2.5h-9.5z" fill="#f0f0f0"/><path d="M29.0 898.0l2.5-2.5v2.5l-2.5 2.5z" fill="#b8b8b8"/><path d="M34.5 885.5v11" stroke="#fff" stroke-width="1.2"/><path d="M34.5 883.0l-2 3h4z" fill="#fff"/>
</svg>
<div class="tr" style="left:1653px;top:170px">BLOWER - NICOTRA RDH 630 K</div>
<div class="tr" style="left:1669px;top:190px">Solid Bodies(1)</div>
<div class="tr" style="left:1669px;top:210px">View: Master</div>
<div class="tr" style="left:1669px;top:230px">Annotations</div>
<div class="tr" style="left:1685px;top:250px">Linear Dimension 1</div>
<div class="tr" style="left:1685px;top:270px">Linear Dimension 2</div>
<div class="tr" style="left:1685px;top:290px">Linear Dimension 3</div>
<div class="tr" style="left:1685px;top:310px">Linear Dimension 4</div>
<div class="tr" style="left:1669px;top:330px">Origin</div>
<div class="tr" style="left:1669px;top:350px">Sketch1</div>
<div class="tr" style="left:1669px;top:370px">Extrusion1</div>
<div class="tr" style="left:1669px;top:390px">Fillet1</div>
<div class="tr" style="left:1669px;top:410px">Shell1</div>
<div class="tr" style="left:1669px;top:430px">Extrusion2</div>
<div class="tr" style="left:1669px;top:450px">Extrusion3</div>
<div class="tr" style="left:1669px;top:470px">Extrusion4</div>
<div class="tr" style="left:1669px;top:490px">Extrusion5</div>
<div class="tr" style="left:1669px;top:510px">Extrusion6</div>
<div class="tr" style="left:1669px;top:530px">Extrusion7</div>
<div class="tr" style="left:1669px;top:550px">Extrusion8</div>
<div class="tr" style="left:1669px;top:570px">Extrusion9</div>
<div class="tr" style="left:1669px;top:590px">Extrusion10</div>
<div class="tr" style="left:1669px;top:610px">3D Sketch1</div>
<div class="tr" style="left:1669px;top:630px">Mirror1</div>
<div class="tr" style="left:1669px;top:650px">Extrusion11</div>
<div class="tr" style="left:1669px;top:670px">3D Sketch2</div>
<div class="tr" style="left:1669px;top:690px">Sketch8</div>
<div class="tr" style="left:1669px;top:710px">3D Sketch3</div>
<div class="tr" style="left:1669px;top:730px">Revolution1</div>
<div class="tr" style="left:1669px;top:750px">Extrusion12</div>
<div class="tr" style="left:1669px;top:770px">Circular Pattern1</div>
<div class="tr" style="left:1669px;top:790px">Mirror2</div>
<div class="tr" style="left:1669px;top:810px">Mirror3</div>
<div class="tr" style="left:1669px;top:830px">Sketch12</div>
<div class="tr" style="left:1669px;top:850px">Extrusion13</div>
<div class="tr" style="left:1669px;top:870px">3D Sketch4</div>
<div class="tr" style="left:1669px;top:890px">Mirror4</div>
<div class="tr" style="left:1669px;top:910px">Mirror5</div>
<div class="tr" style="left:1669px;top:930px">Extrusion14</div>
<div class="tr" style="left:1669px;top:950px">Mirror6</div>
<div class="tr" style="left:1669px;top:970px">Mirror7</div>
<div class="tr" style="left:1669px;top:990px">Mirror8</div>
<div class="tr" style="left:1669px;top:1010px">Extrusion15</div>
<div class="tr" style="left:1669px;top:1030px">Extrusion16</div>
<div class="tr" style="left:1669px;top:1050px"></div>
</div></div>
<!-- STATUS -->
<div class="a" style="left:277px;top:1031px;width:1351px;height:24px;background:#232832"></div>
<div class="a" style="left:277px;top:1031px;width:150px;height:21px;background:#3b4453"></div>
<div class="a" style="left:277px;top:1052px;width:150px;height:3px;background:#38aee6"></div>
<div class="t" style="left:285px;top:1035px;font-size:11.5px;color:#f4f4f4">BLOWER - NICOT...ipt</div>
<svg style="left:277px;top:1031px" width="1351" height="24"><path d="M130 5l7 7M137 5l-7 7" stroke="#b8b8b8" stroke-width="1.4"/><path d="M1331 7h14M1331 12h14M1331 17h14" stroke="#c0c0c0" stroke-width="1.8"/></svg>
<div class="a" style="left:0;top:1055px;width:1920px;height:23px;background:#2e3440"></div>
<div class="t" style="left:2px;top:1061px;font-size:11px;color:#f4f4f4">Ready</div>
<div class="a" style="left:1841px;top:1057px;width:2px;height:21px;background:#e8e8e8"></div>
<div class="a" style="left:1881px;top:1057px;width:2px;height:21px;background:#e8e8e8"></div>
<div class="a" style="left:1918px;top:1057px;width:2px;height:21px;background:#e8e8e8"></div>
<div class="t" style="left:1851px;top:1061px;font-size:11px;color:#f4f4f4">1</div>
<div class="t" style="left:1889px;top:1061px;font-size:11px;color:#f4f4f4">1</div>
<div class="a" style="left:0;top:1078px;width:1920px;height:2px;background:#1d2026"></div>
<div class="a" style="left:48px;top:1078px;width:288px;height:2px;background:#f0f0f0"></div>
<div class="a" style="left:583px;top:1078px;width:47px;height:2px;background:#555a62"></div>
</body></html>
